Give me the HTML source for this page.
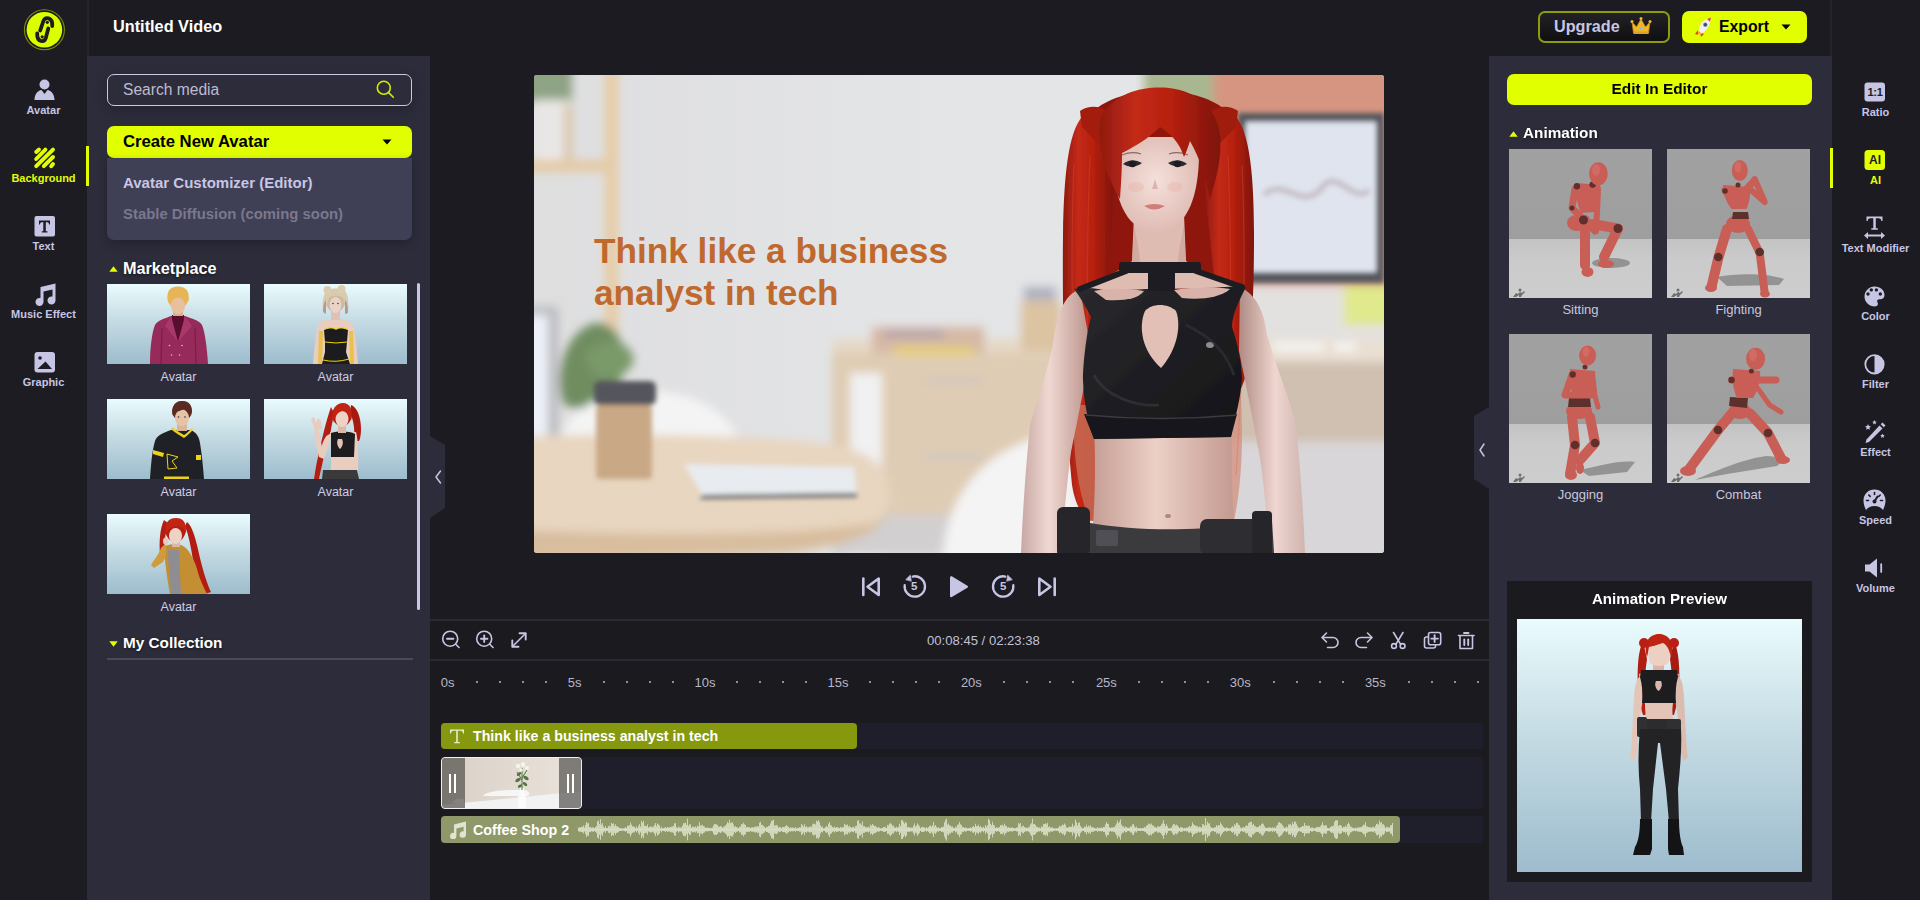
<!DOCTYPE html>
<html><head><meta charset="utf-8">
<style>
*{margin:0;padding:0;box-sizing:border-box}
html,body{width:1920px;height:900px;overflow:hidden;background:#1c1b21;font-family:"Liberation Sans",sans-serif}
.a{position:absolute}
.lav{color:#c7c5e4}
.b{font-weight:bold}
.nowrap{white-space:nowrap}
#lsb{left:0;top:0;width:87px;height:900px;background:#1d1c22}
#lstrip{left:87px;top:0;width:2px;height:56px;background:#25242c}
#lpanel{left:87px;top:56px;width:343px;height:844px;background:#2d2c3b}
#rpanel{left:1489px;top:56px;width:343px;height:844px;background:#2d2c3b}
#rsb{left:1832px;top:0;width:88px;height:900px;background:#1c1b21}
.sbl{font-size:11px;font-weight:bold;text-align:center;width:87px;left:0;line-height:13px;color:#c7c5e4}
.rsbl{font-size:11px;font-weight:bold;text-align:center;width:89px;left:1831px;line-height:13px;color:#c7c5e4}
.thumb{background:linear-gradient(180deg,#e9fbfd 0%,#c6dce4 45%,#9dbccd 100%);overflow:hidden}
.tlab{font-size:12.5px;color:#cfcde0;text-align:center;line-height:14px;margin-top:-1.5px}
.anim{background:linear-gradient(180deg,#a1a1a1 0%,#9e9e9e 60.2%,#c3c3c3 60.6%,#cbcbcb 75%,#cdcdcd 100%);overflow:hidden}
.alab{font-size:13px;color:#c9c7dc;text-align:center;line-height:15px;margin-top:-2px}
.sect{font-size:15.5px;font-weight:bold;color:#fff;text-shadow:0 1px 3px rgba(0,0,0,.6);line-height:18px}
.ruler{font-size:13px;color:#b9b7c9;line-height:15px}
.dot{width:2px;height:2px;background:#8f8d9e;top:681px}
.trk{background:#1f1f2b}
</style></head>
<body>
<div id="lsb" class="a"></div>
<div id="lstrip" class="a"></div>
<div class="a" style="left:1830px;top:0;width:2px;height:56px;background:#25242c"></div>
<div id="lpanel" class="a"></div>
<div id="rpanel" class="a"></div>
<div id="rsb" class="a"></div>
<div class="a" style="left:430px;top:621px;width:1059px;height:279px;background:#1a1a1f"></div>


<!-- logo -->
<svg class="a" style="left:20px;top:5px" width="50" height="50" viewBox="0 0 50 50">
  <circle cx="24.4" cy="24.7" r="20" fill="none" stroke="#7f8f00" stroke-width="1.1"/>
  <circle cx="24.4" cy="24.7" r="17.8" fill="#dcff00"/>
  <g fill="none" stroke="#1d1c22" stroke-width="3.8" stroke-linecap="round">
    <path d="M20.2 25.5 L23.2 16.5 C24.2 13.5 26.5 12.8 28.5 13.3 C31 14 32.5 16.5 32.2 21"/>
    <path d="M28.3 23.5 L25.8 33 C25 35.5 23 36.5 21 36 C18.5 35.2 17 33 17.2 28.5"/>
  </g>
  <circle cx="27.3" cy="17.3" r="1.6" fill="#1d1c22"/>
  <circle cx="22.2" cy="31.8" r="1.6" fill="#1d1c22"/>
</svg>

<!-- left sidebar icons -->
<svg class="a" style="left:34px;top:79px" width="22" height="22" viewBox="0 0 22 22">
  <circle cx="10.5" cy="5.5" r="5" fill="#c7c5e4"/>
  <path d="M0.5 21 C0.5 15 4 11.5 7.5 11 L10.5 15 L13.5 11 C17 11.5 20.5 15 20.5 21 Z" fill="#c7c5e4"/>
</svg>
<div class="a sbl" style="top:104px">Avatar</div>

<div class="a" style="left:86px;top:146px;width:3px;height:40px;background:#e2ff00"></div>
<svg class="a" style="left:28px;top:142px" width="34" height="30" viewBox="28 142 34 30" stroke="#e2ff00" stroke-width="3.9" stroke-linecap="round">
  <line x1="36.2" y1="152" x2="39" y2="149.6"/>
  <line x1="36.2" y1="159" x2="45.4" y2="149.6"/>
  <line x1="36.2" y1="166.2" x2="53" y2="149.6"/>
  <line x1="43.8" y1="166.2" x2="53" y2="157"/>
  <line x1="51.2" y1="166.2" x2="53" y2="164"/>
</svg>
<div class="a sbl" style="top:172px;color:#e2ff00">Background</div>

<svg class="a" style="left:34px;top:216px" width="22" height="21" viewBox="0 0 22 21">
  <rect x="0.5" y="0" width="20.5" height="20.5" rx="2" fill="#c7c5e4"/>
  <path d="M5 4.5 H16 V8.5 H15 C15 6.8 14.3 6.2 12.5 6.2 H11.8 V15.2 H13.5 V16.5 H7.8 V15.2 H9.3 V6.2 H8.5 C6.7 6.2 6 6.8 6 8.5 H5 Z" fill="#1d1c22"/>
</svg>
<div class="a sbl" style="top:240px">Text</div>

<svg class="a" style="left:33px;top:282px" width="23" height="24" viewBox="0 0 23 24">
  <path d="M7.5 5 L22.5 1.5 V18.5 a4 4 0 1 1 -3 -3.9 V7.5 L10.5 9.5 V20 a4 4 0 1 1 -3 -3.9 Z" fill="#c7c5e4"/>
</svg>
<div class="a sbl" style="top:308px">Music Effect</div>

<svg class="a" style="left:34px;top:352px" width="22" height="21" viewBox="0 0 22 21">
  <rect x="0.5" y="0" width="20.5" height="20.5" rx="3" fill="#c7c5e4"/>
  <circle cx="6" cy="6" r="1.8" fill="#1d1c22"/>
  <path d="M3.5 17 L11.5 9.5 L18 17 Z" fill="#1d1c22"/>
</svg>
<div class="a sbl" style="top:376px">Graphic</div>

<!-- header -->
<div class="a b nowrap" style="left:113px;top:17px;font-size:16.3px;color:#fff;line-height:19px">Untitled Video</div>

<div class="a" style="left:1538px;top:11px;width:132px;height:32px;border:2px solid #8d9c0e;border-radius:7px;background:linear-gradient(180deg,#222226,#0f0f12)"></div>
<div class="a b nowrap" style="left:1554px;top:17px;font-size:16.2px;color:#c7c5e4;line-height:19px">Upgrade</div>


<div class="a" style="left:1682px;top:11px;width:125px;height:32px;border-radius:7px;background:#e2ff00"></div>

<div class="a b nowrap" style="left:1719px;top:17px;font-size:15.8px;color:#000;line-height:19px">Export</div>
<svg class="a" style="left:1781px;top:24px" width="10" height="6" viewBox="0 0 10 6"><path d="M0.5 0.5 H9.5 L5 5.5 Z" fill="#000"/></svg>

<!-- left panel -->
<div class="a" style="left:107px;top:74px;width:305px;height:32px;border:1.3px solid #cac8e4;border-radius:7px;box-shadow:0 4px 14px rgba(0,0,0,0.22)"></div>
<div class="a nowrap" style="left:123px;top:81px;font-size:15.6px;color:#bdbbcf;line-height:18px">Search media</div>
<svg class="a" style="left:376px;top:80px" width="19" height="19" viewBox="0 0 19 19" fill="none" stroke="#d4ee00" stroke-width="1.6" stroke-linecap="round">
  <circle cx="7.8" cy="7.8" r="6.5"/><line x1="12.6" y1="12.6" x2="17.3" y2="17.3"/>
</svg>

<div class="a" style="left:107px;top:126px;width:305px;height:32px;border-radius:7px;background:#e2ff00"></div>
<div class="a b nowrap" style="left:123px;top:132px;font-size:16.7px;color:#000;line-height:19px">Create New Avatar</div>
<svg class="a" style="left:382px;top:139px" width="10" height="6" viewBox="0 0 10 6"><path d="M0.5 0.5 H9.5 L5 5.5 Z" fill="#000"/></svg>

<div class="a" style="left:107px;top:158px;width:305px;height:82px;border-radius:0 0 7px 7px;background:#3f3f55;box-shadow:0 3px 10px rgba(0,0,0,0.25)"></div>
<div class="a b nowrap" style="left:123px;top:174px;font-size:15px;color:#c8c6e4;line-height:17px">Avatar Customizer (Editor)</div>
<div class="a b nowrap" style="left:123px;top:206px;font-size:14.9px;color:#7a788e;line-height:17px">Stable Diffusion (coming soon)</div>

<svg class="a" style="left:109px;top:266px" width="9" height="6" viewBox="0 0 9 6"><path d="M4.5 0.3 L8.7 5.7 H0.3 Z" fill="#e2ff00"/></svg>
<div class="a sect nowrap" style="left:123px;top:259px;font-size:16.2px">Marketplace</div>

<div id="thumbs"></div><div class="a thumb" style="left:107px;top:284px;width:143px;height:80px"><svg width="143" height="80" viewBox="0 0 143 80" style="display:block">
<path d="M43 80 C43 64 45 48 48 41 C51 36 57 35 64 32 L78 32 C85 35 92 36 95 41 C98 48 100 64 101 80 Z" fill="#962a5a"/>
<path d="M55 44 L54 80 M88 44 L89 80" stroke="#7a1e48" stroke-width="1.2"/>
<path d="M65 31 L77 31 L77 38 L71 58 L65 38 Z" fill="#5a0e2e"/>
<path d="M64 32 L71 58 L58 42 Z" fill="#a8376c"/><path d="M78 32 L71 58 L85 42 Z" fill="#a8376c"/>
<g fill="#d8c8a8"><circle cx="62.5" cy="61.5" r="0.8"/><circle cx="75" cy="61.5" r="0.8"/><circle cx="64.5" cy="71" r="0.8"/><circle cx="72.5" cy="71" r="0.8"/></g>
<rect x="66" y="26" width="10" height="6" fill="#d6ae8c"/>
<ellipse cx="71" cy="15" rx="10" ry="10" fill="#e8b556"/><ellipse cx="71" cy="22" rx="7" ry="8.5" fill="#e7c19e"/>
<path d="M60.5 16 C59.5 6 64 2.5 71 2.5 C78 2.5 82.5 6 81.8 16 C81 18 80 18 79.5 17 C78 12 76 11 73 12 C70 14 66 15 63 14 C62 16 62 18 61.5 19 Z" fill="#e8b556"/>
</svg></div><div class="a tlab" style="left:107px;top:371px;width:143px">Avatar</div><div class="a thumb" style="left:264px;top:284px;width:143px;height:80px"><svg width="143" height="80" viewBox="0 0 143 80" style="display:block">
<path d="M49 80 C50 64 52 48 54 41 C56 37 62 36 67 35 L76 35 C81 36 87 37 89 41 C91 48 93 64 94 80 Z" fill="#e9cdbf"/>
<path d="M55 47 L59 47 L58 80 L54 80 Z" fill="#e8c038" opacity="0.85"/>
<path d="M85 47 L89 47 L90 80 L86 80 Z" fill="#e8c038" opacity="0.85"/>
<path d="M60 46 C66 43 70 44 72 45.5 C74 44 78 43 84 46 L83 58 L82 68 L86 80 L58 80 L61 68 L61 58 Z" fill="#1c1c1f"/>
<path d="M60 45.5 C66 43 70 44 72 45.5 C74 44 78 43 84 45.5" stroke="#f0d400" stroke-width="1" fill="none"/>
<path d="M61 58 Q72 60 83 58" stroke="#f0d400" stroke-width="1" fill="none"/>
<path d="M59 76 Q72 79 85 75" stroke="#f0d400" stroke-width="1" fill="none"/>
<rect x="67" y="27" width="9" height="9" fill="#e0c0b2"/>
<ellipse cx="71.5" cy="17" rx="10" ry="11" fill="#cdbba0"/><ellipse cx="71.5" cy="21" rx="5.8" ry="8" fill="#ebd2c8"/>
<path d="M59 28 C58 18 59 9 64 6 C68 4 76 4 80 6 C84 9 85 18 84 29 C82 26 81 20 79 14 C76 11 68 11 65 14 C63 20 62 26 59 28 Z" fill="#d9c9ae"/>
<path d="M59 28 C59 22 60 18 62 16 L62 30 Z M84 29 C84 22 83 18 81 16 L81 30 Z" fill="#b39894"/>
<circle cx="63.5" cy="6" r="4" fill="#dccdb0"/><circle cx="77.5" cy="5" r="4" fill="#dccdb0"/>
<circle cx="69" cy="19.5" r="0.8" fill="#4a3a3a"/><circle cx="74" cy="19.5" r="0.8" fill="#4a3a3a"/>
</svg></div><div class="a tlab" style="left:264px;top:371px;width:143px">Avatar</div><div class="a thumb" style="left:107px;top:399px;width:143px;height:80px"><svg width="143" height="80" viewBox="0 0 143 80" style="display:block">
<path d="M43 80 C44 66 45 52 48 42 C50 36 56 34 64 31 L84 31 C90 34 92 38 93 44 C95 56 96 68 97 80 Z" fill="#1f2126"/>
<path d="M64 30 C68 34 74 37 77 39 C80 37 84 33 86 31 L85 29 C82 32 79 35 77 36 C74 34 68 31 66 28 Z" fill="#ecd31a"/>
<path d="M46 51 L57 54 L56 58 L46 55 Z" fill="#ecd31a"/>
<path d="M89 56 L94 56 L94 61 L89 61 Z" fill="#ecd31a"/>
<path d="M60 55 L71 58 L65 62 L70 69 L61 70 Z" fill="none" stroke="#ecd31a" stroke-width="1"/>
<rect x="57" y="77.5" width="25" height="2.5" fill="#ecd31a"/>
<rect x="70" y="24" width="10" height="8" fill="#d9b59a"/>
<ellipse cx="75" cy="12" rx="10" ry="10" fill="#5b2a22"/><ellipse cx="75" cy="19" rx="7" ry="8.5" fill="#e6c3a6"/>
<path d="M65.5 16 C64.5 6 69 2 75 2 C82 2 86 6 84.5 15 C83 11 80 10 77 10 C73 12 70 13 67 13 C66.5 15 66.5 16 65.5 16 Z" fill="#5b2a22"/>
<circle cx="71.5" cy="18" r="0.8" fill="#3a2a2a"/><circle cx="78" cy="18" r="0.8" fill="#3a2a2a"/>
</svg></div><div class="a tlab" style="left:107px;top:486px;width:143px">Avatar</div><div class="a thumb" style="left:264px;top:399px;width:143px;height:80px"><svg width="143" height="80" viewBox="0 0 143 80" style="display:block">
<path d="M67 8 C62 22 58 40 54 58 C52 66 51 74 50 80 L55 80 C58 66 62 48 66 36 L70 14 Z" fill="#b41e12"/>
<path d="M87 6 C93 8 97 18 97 30 C97 36 96 40 95 42 L90 42 C91 32 90 22 86 14 Z" fill="#a81a10"/>
<path d="M66 35 C62 36 60 40 58 46 L55 58 L60 60 L64 48 L66 44 Z" fill="#e8ccbe"/>
<path d="M55 58 C53 50 51 40 50 30 L54 28 C56 38 58 48 60 58 Z" fill="#e8ccbe"/>
<path d="M47 20 L50 18 L52 24 L54 19 L57 22 L58 30 L51 31 Z" fill="#e8ccbe"/>
<path d="M66 33 L92 33 C94 40 95 55 94 80 L66 80 C68 60 67 45 66 33 Z" fill="#e9cdbf"/>
<path d="M67 34 C75 32 85 32 91 35 L90 58 L67 58 Z" fill="#1d1d20"/>
<path d="M74 40 C72 44 74 48 76 50 C78 48 80 44 78 40 Z" fill="#e4c2b4"/>
<path d="M59 71 L93 71 L95 80 L58 80 Z" fill="#3a3a3d"/>
<rect x="74" y="26" width="8" height="8" fill="#dcb8a8"/>
<ellipse cx="78" cy="16" rx="10" ry="11" fill="#b41e12"/><ellipse cx="78" cy="20" rx="6.5" ry="8" fill="#ecd3c6"/>
<path d="M69 24 C67 10 72 4 79 4 C86 4 89 10 87 22 C86 16 83 12 79 12 C75 12 71 16 69 24 Z" fill="#c22414"/>
</svg></div><div class="a tlab" style="left:264px;top:486px;width:143px">Avatar</div><div class="a thumb" style="left:107px;top:514px;width:143px;height:80px"><svg width="143" height="80" viewBox="0 0 143 80" style="display:block">
<path d="M57 6 C53 14 52 28 53 40 L57 44 C57 30 58 18 62 10 Z" fill="#b31e12"/>
<path d="M80 8 C86 12 90 30 94 48 C97 60 101 72 104 78 L98 80 C94 70 90 58 86 46 C84 34 82 22 78 12 Z" fill="#b21d12"/>
<path d="M58 32 C62 30 70 30 74 31 C82 34 88 46 92 62 C95 70 98 76 100 80 L63 80 C61 70 59 56 58 46 Z" fill="#c48f33"/>
<path d="M61 36 L72 36 C73 50 73 66 74 80 L64 80 C63 66 61 50 61 36 Z" fill="#8d8d92"/>
<path d="M58 30 C60 36 60 42 56 48 L47 54 L44 51 C47 46 52 40 54 34 Z" fill="#cf9b3c"/>
<ellipse cx="58.5" cy="27" rx="2.5" ry="3.5" fill="#e7c8ba"/>
<rect x="65" y="26" width="8" height="7" fill="#dcb8a8"/>
<ellipse cx="68.5" cy="17" rx="10" ry="11" fill="#b41e12"/><ellipse cx="68.5" cy="22" rx="6.5" ry="8" fill="#ecd3c6"/>
<path d="M59 20 C57 8 62 4 69 4 C76 4 80 8 79 20 C77 14 74 12 69 12 C65 12 61 15 59 20 Z" fill="#c42416"/>
</svg></div><div class="a tlab" style="left:107px;top:601px;width:143px">Avatar</div><div class="a anim" style="left:1509px;top:149px;width:143px;height:149px"><svg width="143" height="149" viewBox="0 0 143 149" style="display:block"><ellipse cx="102" cy="114" rx="19" ry="5" fill="#7a7a7a" opacity="0.7"/><path d="M76 71 L76 116" stroke="#c85e56" stroke-width="10" stroke-linecap="round" stroke-linejoin="round" fill="none"/><ellipse cx="78.5" cy="123" rx="6" ry="5" fill="#c85e56"/><path d="M83 75 L109 79.5 L95 108" stroke="#c85e56" stroke-width="10" stroke-linecap="round" stroke-linejoin="round" fill="none"/><ellipse cx="97" cy="115" rx="8" ry="4" fill="#c85e56"/><ellipse cx="68" cy="74" rx="10" ry="8" fill="#c85e56"/><path d="M68 34 L91 36 C92 46 90 56 86 63 L72 64 C68 56 66 44 68 34 Z" fill="#c85e56"/><path d="M66 40 L63 59 L86 82" stroke="#c85e56" stroke-width="7" stroke-linecap="round" stroke-linejoin="round" fill="none"/><path d="M89 40 L88 63 L87 82" stroke="#c85e56" stroke-width="6" stroke-linecap="round" stroke-linejoin="round" fill="none"/><circle cx="67.9" cy="37.3" r="3.2" fill="#5e302c"/><circle cx="83.6" cy="35.6" r="3.2" fill="#5e302c"/><circle cx="63" cy="59" r="2.5" fill="#5e302c"/><circle cx="74.5" cy="71" r="4.5" fill="#5e302c"/><circle cx="109" cy="79.5" r="4.5" fill="#5e302c"/><ellipse cx="89.4" cy="24.8" rx="9.4" ry="11.6" fill="#c85e56"/><ellipse cx="87" cy="21" rx="4" ry="6" fill="#d77a70" opacity="0.5"/><g fill="#6e6e6e"><circle cx="11" cy="141" r="1.5"/><path d="M4 148 L7 144 L9 145 L11 143 L13 144 L15 142 L16 143 L13 146 L12 148 L10 148 L10 146 L7 148 Z"/></g></svg></div><div class="a alab" style="left:1509px;top:304px;width:143px">Sitting</div><div class="a anim" style="left:1667px;top:149px;width:143px;height:149px"><svg width="143" height="149" viewBox="0 0 143 149" style="display:block"><path d="M50 128 C70 124 100 124 117 130 L112 136 L60 137 Z" fill="#7a7a7a" opacity="0.7"/><path d="M60 80 L51.3 109 L44.7 137" stroke="#c85e56" stroke-width="10" stroke-linecap="round" stroke-linejoin="round" fill="none"/><path d="M81 80 L92.7 104 L97.7 144" stroke="#c85e56" stroke-width="8" stroke-linecap="round" stroke-linejoin="round" fill="none"/><ellipse cx="44" cy="139" rx="6" ry="4" fill="#c85e56"/><ellipse cx="98" cy="145" rx="5" ry="3.5" fill="#c85e56"/><ellipse cx="71" cy="75" rx="12" ry="9" fill="#c85e56"/><path d="M66 63 L81 63 L82 70 L65 70 Z" fill="#5e302c"/><path d="M56 36 L83 38 C84 46 82 54 79.5 60 L64.6 60 C60 54 56 46 56 36 Z" fill="#c85e56"/><path d="M58 41 L66 54.6 L86 33" stroke="#c85e56" stroke-width="7" stroke-linecap="round" stroke-linejoin="round" fill="none"/><path d="M83 40 L97.7 53 L87.7 30" stroke="#c85e56" stroke-width="6" stroke-linecap="round" stroke-linejoin="round" fill="none"/><circle cx="51.3" cy="108" r="4.3" fill="#5e302c"/><circle cx="92.7" cy="103" r="4.3" fill="#5e302c"/><circle cx="58" cy="42" r="2.8" fill="#5e302c"/><circle cx="71" cy="36" r="2.5" fill="#5e302c"/><ellipse cx="72.8" cy="21.5" rx="8" ry="10.5" fill="#c85e56"/><ellipse cx="71" cy="18" rx="3.5" ry="5.5" fill="#d77a70" opacity="0.5"/><g fill="#6e6e6e"><circle cx="11" cy="141" r="1.5"/><path d="M4 148 L7 144 L9 145 L11 143 L13 144 L15 142 L16 143 L13 146 L12 148 L10 148 L10 146 L7 148 Z"/></g></svg></div><div class="a alab" style="left:1667px;top:304px;width:143px">Fighting</div><div class="a anim" style="left:1509px;top:334px;width:143px;height:149px"><svg width="143" height="149" viewBox="0 0 143 149" style="display:block"><path d="M71 136 C90 132 110 126 126 128 L118 138 L80 142 Z" fill="#7a7a7a" opacity="0.7"/><path d="M81 83 L86 109 L71 126" stroke="#c85e56" stroke-width="10" stroke-linecap="round" stroke-linejoin="round" fill="none"/><ellipse cx="71" cy="134" rx="4" ry="6" fill="#c85e56"/><path d="M63 83 L66 111 L61 140" stroke="#c85e56" stroke-width="10" stroke-linecap="round" stroke-linejoin="round" fill="none"/><ellipse cx="62" cy="141" rx="6" ry="5" fill="#c85e56"/><ellipse cx="70" cy="77" rx="13" ry="8" fill="#c85e56"/><path d="M60 64 L81 64 L82 73 L59 73 Z" fill="#5e302c"/><path d="M61 35 L86 37 C87 46 85 54 81 62 L64.6 63 C61 54 60 44 61 35 Z" fill="#c85e56"/><path d="M63 41 L56 61 L84.4 61" stroke="#c85e56" stroke-width="7" stroke-linecap="round" stroke-linejoin="round" fill="none"/><path d="M84 44 L86 62 L89 73" stroke="#c85e56" stroke-width="5" stroke-linecap="round" stroke-linejoin="round" fill="none"/><circle cx="63.7" cy="40.5" r="3.2" fill="#5e302c"/><circle cx="76" cy="33" r="2.5" fill="#5e302c"/><circle cx="66" cy="111" r="4.3" fill="#5e302c"/><circle cx="86" cy="109" r="4.3" fill="#5e302c"/><ellipse cx="78.6" cy="21.5" rx="8.5" ry="10" fill="#c85e56"/><ellipse cx="77" cy="18" rx="3.5" ry="5" fill="#d77a70" opacity="0.5"/><g fill="#6e6e6e"><circle cx="11" cy="141" r="1.5"/><path d="M4 148 L7 144 L9 145 L11 143 L13 144 L15 142 L16 143 L13 146 L12 148 L10 148 L10 146 L7 148 Z"/></g></svg></div><div class="a alab" style="left:1509px;top:489px;width:143px">Jogging</div><div class="a anim" style="left:1667px;top:334px;width:143px;height:149px"><svg width="143" height="149" viewBox="0 0 143 149" style="display:block"><path d="M28 146 C50 136 80 124 100 122 L119 124 L110 132 L60 140 Z" fill="#7a7a7a" opacity="0.7"/><path d="M66 78 L51 96 L21.5 136" stroke="#c85e56" stroke-width="10" stroke-linecap="round" stroke-linejoin="round" fill="none"/><ellipse cx="21" cy="137" rx="8" ry="5" fill="#c85e56"/><path d="M83 79.5 L101 99 L114 124" stroke="#c85e56" stroke-width="10" stroke-linecap="round" stroke-linejoin="round" fill="none"/><ellipse cx="116" cy="126" rx="7" ry="4" fill="#c85e56"/><ellipse cx="73" cy="77" rx="11" ry="8" fill="#c85e56"/><path d="M63 63 L81 64 L80 74 L62 72 Z" fill="#5e302c"/><path d="M66 35 L93 37 C94 46 91 56 86 64 L70 64 C66 56 65 44 66 35 Z" fill="#c85e56"/><path d="M64.6 46 L109 46" stroke="#c85e56" stroke-width="7" stroke-linecap="round" stroke-linejoin="round" fill="none"/><path d="M91 54.6 L102.6 71 L114 78" stroke="#c85e56" stroke-width="5" stroke-linecap="round" stroke-linejoin="round" fill="none"/><circle cx="64.6" cy="46" r="3.2" fill="#5e302c"/><circle cx="84.4" cy="37" r="2.5" fill="#5e302c"/><circle cx="51" cy="96" r="4.3" fill="#5e302c"/><circle cx="101" cy="99" r="4.3" fill="#5e302c"/><ellipse cx="88.6" cy="24.8" rx="9.5" ry="11" fill="#c85e56"/><ellipse cx="86" cy="21" rx="4" ry="6" fill="#d77a70" opacity="0.5"/><g fill="#6e6e6e"><circle cx="11" cy="141" r="1.5"/><path d="M4 148 L7 144 L9 145 L11 143 L13 144 L15 142 L16 143 L13 146 L12 148 L10 148 L10 146 L7 148 Z"/></g></svg></div><div class="a alab" style="left:1667px;top:489px;width:143px">Combat</div>

<div class="a" style="left:417px;top:283px;width:3px;height:327px;border-radius:2px;background:#c7c5e8"></div>

<svg class="a" style="left:109px;top:641px" width="9" height="6" viewBox="0 0 9 6"><path d="M4.5 5.7 L8.7 0.3 H0.3 Z" fill="#e2ff00"/></svg>
<div class="a sect nowrap" style="left:123px;top:634px;font-size:15.3px">My Collection</div>
<div class="a" style="left:107px;top:658px;width:306px;height:2px;background:#4a4959"></div>

<!-- collapse tabs -->
<svg class="a" style="left:430px;top:436px" width="16" height="84" viewBox="0 0 16 84"><path d="M0 0 L15 9 V72 L0 82 Z" fill="#2d2c3b"/><path d="M10.5 35 L6 41 L10.5 47" fill="none" stroke="#c7c5e4" stroke-width="1.5" stroke-linecap="round" stroke-linejoin="round"/></svg>
<svg class="a" style="left:1474px;top:407px" width="16" height="84" viewBox="0 0 16 84"><path d="M15 0 L0 9 V72 L15 82 Z" fill="#2d2c3b"/><path d="M10 37 L6 43 L10 49" fill="none" stroke="#c7c5e4" stroke-width="1.5" stroke-linecap="round" stroke-linejoin="round"/></svg>

<!-- preview -->
<div id="preview" class="a" style="left:534px;top:75px;width:850px;height:478px;border-radius:3px;overflow:hidden"><svg style="display:block" width="850" height="478" viewBox="0 0 850 478">
<defs>
  <filter id="bl6" x="-20%" y="-20%" width="140%" height="140%"><feGaussianBlur stdDeviation="5"/></filter>
  <filter id="bl3" x="-20%" y="-20%" width="140%" height="140%"><feGaussianBlur stdDeviation="2.5"/></filter>
  <filter id="bl1"><feGaussianBlur stdDeviation="0.8"/></filter>
  <filter id="bl05" x="-5%" y="-5%" width="110%" height="110%"><feGaussianBlur stdDeviation="0.55"/></filter>
  <linearGradient id="wallg" x1="0" y1="0" x2="1" y2="0">
    <stop offset="0" stop-color="#dededf"/><stop offset="0.4" stop-color="#e3e4e6"/><stop offset="1" stop-color="#e5e6e8"/>
  </linearGradient>
  <linearGradient id="hairg" x1="0" y1="0" x2="1" y2="0">
    <stop offset="0" stop-color="#8e1a10"/><stop offset="0.3" stop-color="#c42a16"/><stop offset="0.6" stop-color="#b5200f"/><stop offset="1" stop-color="#7d140c"/>
  </linearGradient>
  <linearGradient id="hairend" x1="0" y1="0" x2="0" y2="1">
    <stop offset="0" stop-color="#b3200f"/><stop offset="0.6" stop-color="#b83a26"/><stop offset="1" stop-color="#d9a08e" stop-opacity="0.3"/>
  </linearGradient>
  <linearGradient id="skinarmL" x1="0" y1="0" x2="1" y2="0">
    <stop offset="0" stop-color="#c8a8a4"/><stop offset="0.4" stop-color="#f0d8d2"/><stop offset="1" stop-color="#b89088"/>
  </linearGradient>
  <linearGradient id="skinarmR" x1="0" y1="0" x2="1" y2="0">
    <stop offset="0" stop-color="#b08a84"/><stop offset="0.55" stop-color="#efd6d0"/><stop offset="1" stop-color="#d0b4ae"/>
  </linearGradient>
  <linearGradient id="midg" x1="0" y1="0" x2="1" y2="0">
    <stop offset="0" stop-color="#c49d94"/><stop offset="0.45" stop-color="#ecd0c6"/><stop offset="1" stop-color="#c29890"/>
  </linearGradient>
  <radialGradient id="faceg" cx="0.5" cy="0.45" r="0.6">
    <stop offset="0" stop-color="#f5e0da"/><stop offset="1" stop-color="#dcb8b0"/>
  </radialGradient>
  <linearGradient id="topg" x1="0" y1="0" x2="1" y2="1">
    <stop offset="0" stop-color="#2a2a2e"/><stop offset="0.5" stop-color="#1e1e22"/><stop offset="1" stop-color="#141416"/>
  </linearGradient>
</defs>
<rect width="850" height="478" fill="url(#wallg)"/>
<g filter="url(#bl6)">
  <!-- top-left shelf & plant -->
  <rect x="-10" y="-10" width="48" height="38" fill="#8fa385"/>
  <rect x="0" y="25" width="36" height="62" fill="#e9e7e5"/>
  <rect x="30" y="30" width="8" height="56" fill="#d9c4a6"/>
  <rect x="-10" y="85" width="84" height="12" fill="#e4caa4"/>
  <rect x="71" y="-10" width="13" height="345" fill="#e6cca6"/>
  <!-- right-side backgrounds -->
  <rect x="610" y="-10" width="72" height="55" fill="#a8b78f"/>
  <rect x="679" y="-10" width="180" height="220" fill="#d59580"/>
  <rect x="600" y="210" width="260" height="80" fill="#e3e1df"/>
  <rect x="810" y="210" width="50" height="40" fill="#e0e98c"/>
  <rect x="560" y="265" width="300" height="24" fill="#e9dfd2"/>
  <rect x="560" y="287" width="300" height="80" fill="#cfc0b1"/>
  <rect x="560" y="368" width="300" height="120" fill="#d8d6d8"/>
  <rect x="740" y="268" width="50" height="8" fill="#f6f6f6"/>
  <rect x="800" y="268" width="22" height="8" fill="#f6f6f6"/>
  <!-- cabinet -->
  <rect x="298" y="264" width="240" height="180" fill="#dfccb4"/><rect x="298" y="264" width="240" height="14" fill="#e6d8c6"/><rect x="390" y="304" width="60" height="4" fill="#c9c6c4"/><rect x="390" y="380" width="60" height="4" fill="#c9c6c4"/>
  <rect x="316" y="298" width="32" height="190" fill="#f1f1f2"/>
  <rect x="298" y="440" width="240" height="40" fill="#d2cfd0"/>
  <rect x="338" y="252" width="112" height="26" fill="#d6b9a6"/><rect x="350" y="256" width="60" height="6" fill="#8c8cb0" opacity="0.6"/>
  <rect x="360" y="272" width="80" height="8" fill="#e8d070"/>
  <rect x="487" y="226" width="40" height="50" fill="#dcc3a2"/><rect x="490" y="212" width="32" height="14" fill="#8e8ea6" opacity="0.6"/>
  <!-- left monitor -->
  <rect x="-10" y="232" width="34" height="180" fill="#b9babe"/>
  <rect x="-10" y="240" width="24" height="150" fill="#edf1f8"/>
  <!-- plant -->
  <path d="M30 330 C20 300 30 262 55 250 C80 240 95 270 88 300 C84 320 70 335 50 335 Z" fill="#6f8d60"/><path d="M50 280 C70 262 96 262 100 285 C96 300 80 305 60 300 Z" fill="#7a9a6a"/>
  <!-- white chair back -->
  <path d="M27 372 C27 338 60 318 110 316 C160 316 198 336 208 374 Z" fill="#f4f4f5"/>
  <!-- right chair -->
  <path d="M408 490 C410 430 440 375 520 358 L540 358 L540 490 Z" fill="#f4f4f5"/>
  <!-- table -->
  <path d="M-10 362 C80 357 230 360 300 370 C345 378 358 400 356 425 C352 450 320 466 250 470 L-10 475 Z" fill="#e8d6c0"/>
  <path d="M-10 455 C100 460 260 462 340 448 C350 445 354 438 356 428 C354 452 330 470 250 478 L-10 485 Z" fill="#d8bd9e"/>
</g>
<g filter="url(#bl3)">
  <!-- cup -->
  <rect x="62" y="330" width="56" height="74" rx="4" fill="#c9a885"/>
  <rect x="60" y="306" width="62" height="24" rx="6" fill="#55565d"/>
  <!-- notebook -->
  <path d="M150 389 L320 392 L323 418 L168 420 Z" fill="#e8ebef"/>
  <path d="M168 420 L323 418 L323 422 L166 424 Z" fill="#5a5d66"/>
</g>
<!-- figure -->
<g filter="url(#bl05)">
  <!-- monitor (right bg) -->
  <g filter="url(#bl3)">
    <rect x="704" y="38" width="146" height="170" fill="#57585e"/>
    <rect x="712" y="47" width="130" height="150" fill="#dfe4ee"/>
    <path d="M730 120 C750 100 770 140 790 110 C805 95 820 130 835 115" stroke="#b9a9b0" stroke-width="6" fill="none" opacity="0.6"/>
  </g>
  <!-- back hair -->
  <path d="M562 34 C590 10 662 10 690 34 C704 60 702 150 698 320 L552 320 C548 150 548 60 562 34 Z" fill="#8f170d"/>
  <!-- pigtails -->
  <path d="M552 38 C536 50 530 90 529 160 C528 250 531 340 538 410 C542 435 552 446 562 446 C560 380 565 300 572 230 C578 160 582 100 580 60 Z" fill="url(#hairg)"/>
  <path d="M698 38 C714 50 720 90 720 160 C720 220 718 260 712 300 C706 320 700 326 694 326 C692 300 688 260 682 220 C676 160 668 100 670 60 Z" fill="url(#hairg)"/>
  <path d="M546 36 C558 28 574 32 580 44 C582 56 578 70 572 78 C566 70 556 60 548 52 Z" fill="#a31b0f"/>
  <path d="M704 36 C692 28 676 32 670 44 C668 56 672 70 678 78 C684 70 694 60 702 52 Z" fill="#a01a0e"/>
  <g stroke="#d9452a" stroke-width="1.2" opacity="0.45" fill="none">
    <path d="M540 90 C536 180 538 280 546 400"/><path d="M556 80 C552 180 552 280 556 420"/>
    <path d="M708 90 C712 180 710 280 702 400"/><path d="M694 80 C698 180 698 280 692 420"/>
  </g>
  <path d="M540 330 C538 380 545 420 556 446 L566 446 C562 400 563 360 566 330 Z" fill="#c66a52" opacity="0.85"/>
  <path d="M706 310 C710 360 708 410 700 446 L692 446 C696 400 696 350 694 310 Z" fill="#d48a76" opacity="0.7"/>
  <!-- arms -->
  <path d="M546 214 C530 220 522 240 519 270 C512 300 502 330 496 350 C492 390 489 430 487 478 L527 478 C530 440 534 400 537 377 C545 340 552 300 557 276 Z" fill="url(#skinarmL)"/>
  <path d="M706 212 C722 220 730 235 733 260 C745 300 758 330 762 350 C766 390 769 430 771 478 L735 478 C733 440 729 400 725 377 C718 340 710 300 705 276 Z" fill="url(#skinarmR)"/>
  <!-- neck & chest -->
  <path d="M600 140 L650 140 L652 186 C668 198 690 206 712 212 L540 216 C562 206 584 198 598 186 Z" fill="#dfbcb2"/>
  <path d="M600 150 C604 170 606 180 606 190 L598 190 Z M650 150 C646 170 644 180 644 190 L652 190 Z" fill="#c89c92" opacity="0.6"/>
  <!-- midriff -->
  <path d="M560 355 L698 355 C697 390 698 420 702 478 L557 478 C561 430 562 390 560 355 Z" fill="url(#midg)"/>
  <ellipse cx="634" cy="441" rx="3" ry="2" fill="#b08a82"/>
  <!-- top -->
  <path d="M540 214 C552 212 566 213 580 218 L612 214 L642 214 L672 214 C686 212 700 211 712 212 C704 228 698 240 698 252 C704 270 708 290 708 303 C706 330 700 345 697 362 L560 364 C554 345 550 330 549 305 C549 290 552 260 557 242 C552 232 546 222 540 214 Z" fill="url(#topg)"/>
  <rect x="585" y="187" width="82" height="11" rx="3" fill="#1f1f22"/>
  <rect x="614" y="196" width="27" height="20" fill="#1f1f22"/>
  <path d="M592 196 L546 214" stroke="#1f1f22" stroke-width="6" stroke-linecap="round"/>
  <path d="M662 196 L708 212" stroke="#1f1f22" stroke-width="6" stroke-linecap="round"/>
  <path d="M550 339 Q628 346 703 339 L697 362 L560 364 Z" fill="#19191c"/>
  <path d="M552 340 Q628 347 703 340" stroke="#3b3b40" stroke-width="1.4" fill="none"/>
  <!-- cutouts -->
  <path d="M611 236 C604 252 608 276 627 293 C642 276 648 252 642 236 C634 228 618 228 611 236 Z" fill="#e2c0b5"/>
  <path d="M560 216 C574 213 592 213 610 216 C604 224 590 226 572 225 Z" fill="#d9b3a9"/>
  <path d="M640 215 C660 212 680 212 696 214 C686 223 666 225 648 223 Z" fill="#d9b3a9"/>
  <ellipse cx="676" cy="270" rx="4" ry="3" fill="#d8d8dc" opacity="0.6"/><path d="M560 300 C570 320 600 332 625 330" stroke="#3a3a3f" stroke-width="3" fill="none" opacity="0.6"/><path d="M652 250 C668 258 690 270 700 300" stroke="#3a3a3f" stroke-width="3" fill="none" opacity="0.5"/>
  <!-- face -->
  <path d="M579 62 C578 100 582 128 596 145 C606 155 614 159 621 159 C628 159 638 155 648 145 C662 128 666 100 665 62 Z" fill="url(#faceg)"/>
  <path d="M589 89 Q598 82 608 88 Q598 95 589 89 Z" fill="#2a2930"/>
  <path d="M634 88 Q644 82 653 89 Q644 95 634 88 Z" fill="#2a2930"/>
  <circle cx="598.5" cy="89" r="3.3" fill="#1b1a20"/><circle cx="643.5" cy="89" r="3.3" fill="#1b1a20"/>
  <path d="M588 80 Q598 76 607 79 M635 79 Q644 76 654 80" stroke="#8a6a66" stroke-width="1.2" fill="none"/>
  <path d="M621 104 L618 114 L624 114 Z" fill="#d3a49c" opacity="0.7"/>
  <path d="M610 131 Q620 127 631 131 Q620 138 610 131 Z" fill="#cf7f78"/>
  <ellipse cx="602" cy="112" rx="8" ry="5" fill="#e8a8a0" opacity="0.3"/>
  <ellipse cx="641" cy="112" rx="8" ry="5" fill="#e8a8a0" opacity="0.3"/>
  <!-- bangs -->
  <path d="M566 44 C580 16 612 11 635 13 C662 16 682 32 686 60 C688 84 682 104 676 124 C672 102 666 84 656 66 C654 72 652 78 650 82 C646 68 636 58 626 52 C614 64 600 72 588 78 C588 96 587 110 586 124 C574 104 562 74 566 44 Z" fill="url(#hairg)"/>
  <!-- belt -->
  <path d="M523 446 L556 448 C600 456 660 456 700 450 L738 446 L740 478 L523 478 Z" fill="#3a3a3e"/>
  <rect x="523" y="432" width="33" height="48" rx="6" fill="#27272a"/>
  <rect x="666" y="444" width="60" height="36" rx="7" fill="#2f2f33"/>
  <rect x="718" y="436" width="20" height="44" rx="4" fill="#26262a"/>
  <rect x="562" y="455" width="22" height="16" rx="2" fill="#505055"/>
</g>
</svg>
</div>

<div class="a b nowrap" style="left:594px;top:230px;font-size:35.2px;line-height:42px;color:#c0692f">Think like a business<br>analyst in tech</div>
<!-- playback -->
<!-- playback -->
<svg class="a" style="left:858px;top:572px" width="204" height="30" viewBox="858 572 204 30" fill="none" stroke="#c7c5e4" stroke-width="2.6" stroke-linecap="round" stroke-linejoin="round">
  <line x1="863.3" y1="578.5" x2="863.3" y2="595"/>
  <path d="M878.7 578.5 V595 L867.5 586.8 Z"/>
  <path d="M912.68 576.52 A10.2 10.2 0 1 1 904.70 585.08" stroke-width="2.3"/><path d="M906 579.4 L910.3 575.2 L911.2 580.8 Z" fill="#c7c5e4" stroke="#c7c5e4" stroke-width="0.8"/>
  <path d="M951.2 577.4 V596 L966.8 586.7 Z" fill="#c7c5e4" stroke-width="2.4"/>
  <path d="M1005.32 576.52 A10.2 10.2 0 1 0 1013.30 585.08" stroke-width="2.3"/><path d="M1012 579.4 L1007.7 575.2 L1006.8 580.8 Z" fill="#c7c5e4" stroke="#c7c5e4" stroke-width="0.8"/>
  <path d="M1039.3 578.5 V595 L1050.5 586.8 Z"/>
  <line x1="1054.7" y1="578.5" x2="1054.7" y2="595"/>
</svg>
<div class="a b" style="left:903.3px;top:579.5px;width:22px;text-align:center;font-size:11.5px;line-height:13px;color:#c7c5e4">5</div>
<div class="a b" style="left:992.2px;top:579.5px;width:22px;text-align:center;font-size:11.5px;line-height:13px;color:#c7c5e4">5</div>

<!-- timeline tools -->
<svg class="a" style="left:438px;top:627px" width="96" height="26" viewBox="438 627 96 26" fill="none" stroke="#c7c5e4" stroke-width="1.6" stroke-linecap="round" stroke-linejoin="round">
  <circle cx="450.2" cy="638.7" r="7.5"/><line x1="455.8" y1="644.3" x2="459" y2="647.5"/><line x1="447" y1="638.7" x2="453.4" y2="638.7" stroke-width="1.9"/>
  <circle cx="484.2" cy="638.7" r="7.5"/><line x1="489.8" y1="644.3" x2="493" y2="647.5"/><line x1="481" y1="638.7" x2="487.4" y2="638.7" stroke-width="1.9"/><line x1="484.2" y1="635.5" x2="484.2" y2="641.9" stroke-width="1.9"/>
  <line x1="512.5" y1="646.5" x2="525.5" y2="633.5"/><path d="M512.3 640.5 V646.7 H518.5" stroke-width="1.9"/><path d="M519.5 633.3 H525.7 V639.5" stroke-width="1.9"/>
</svg>
<svg class="a" style="left:1316px;top:627px" width="164" height="26" viewBox="1316 627 164 26" fill="none" stroke="#c7c5e4" stroke-width="1.6" stroke-linecap="round" stroke-linejoin="round">
  <path d="M1326.5 633 L1322 637.5 L1326.5 642"/><path d="M1322.5 637.5 H1333 A5 5 0 0 1 1333 647.5 H1327.5"/>
  <path d="M1367.5 633 L1372 637.5 L1367.5 642"/><path d="M1371.5 637.5 H1361 A5 5 0 0 0 1361 647.5 H1366.5"/>
  <line x1="1393.5" y1="632.5" x2="1400.5" y2="644.2"/><line x1="1403" y1="632.5" x2="1396" y2="644.2"/><circle cx="1394" cy="646" r="2.4"/><circle cx="1402.6" cy="646" r="2.4"/>
  <rect x="1428.5" y="632.5" width="12.2" height="12.2" rx="2"/><path d="M1428 637 H1426.5 A2 2 0 0 0 1424.5 639 V646 A2 2 0 0 0 1426.5 648 H1433.5 A2 2 0 0 0 1435.5 646 V645"/><line x1="1434.6" y1="635.3" x2="1434.6" y2="641.9" stroke-width="1.9"/><line x1="1431.3" y1="638.6" x2="1437.9" y2="638.6" stroke-width="1.9"/>
  <line x1="1458.5" y1="635.5" x2="1474" y2="635.5"/><line x1="1464" y1="633" x2="1468.5" y2="633" stroke-width="1.9"/><path d="M1460 636 V648.5 H1472.5 V636"/><line x1="1464.3" y1="639.5" x2="1464.3" y2="645" stroke-width="1.9"/><line x1="1468.2" y1="639.5" x2="1468.2" y2="645" stroke-width="1.9"/>
</svg>

<!-- right sidebar icons -->
<svg class="a" style="left:1864px;top:82px" width="22" height="21" viewBox="0 0 22 21"><rect x="0.5" y="0.5" width="20.5" height="19" rx="3" fill="#c7c5e4"/></svg>
<div class="a b nowrap" style="left:1864px;top:86px;width:22px;text-align:center;font-size:11px;line-height:12px;color:#1d1c22;letter-spacing:-0.3px">1:1</div>
<div class="a rsbl" style="top:106px">Ratio</div>

<div class="a" style="left:1830px;top:148px;width:3px;height:40px;background:#e2ff00"></div>
<svg class="a" style="left:1864px;top:150px" width="22" height="21" viewBox="0 0 22 21"><rect x="0.5" y="0" width="20.5" height="20" rx="3.5" fill="#e2ff00"/></svg>
<div class="a b nowrap" style="left:1864px;top:154px;width:22px;text-align:center;font-size:12px;line-height:13px;color:#1d1c22">AI</div>
<div class="a rsbl" style="top:174px;color:#e2ff00">AI</div>

<svg class="a" style="left:1863px;top:215px" width="24" height="25" viewBox="0 0 24 25" fill="#c7c5e4">
  <path d="M3.5 1.5 H19.5 V6 H18.3 C18.2 4 17.5 3.2 15.5 3.2 H12.8 V13.3 H14.8 V14.8 H8.3 V13.3 H10.3 V3.2 H7.5 C5.5 3.2 4.8 4 4.7 6 H3.5 Z"/>
  <path d="M1 20.5 L5 17 V19.6 H18 V17 L22 20.5 L18 24 V21.4 H5 V24 Z"/>
</svg>
<div class="a rsbl" style="top:242px">Text Modifier</div>

<svg class="a" style="left:1864px;top:286px" width="21" height="21" viewBox="0 0 21 21">
  <path d="M10.5 0.5 C16.5 0.5 20.5 4.5 20.5 9 C20.5 12.5 18 13.5 15.5 13.2 C13.5 13 12.5 14.5 13.5 16.3 C14.5 18 13.8 20.5 11 20.5 C5 20.5 0.5 16 0.5 10.5 C0.5 5 5 0.5 10.5 0.5 Z" fill="#c7c5e4"/>
  <circle cx="4" cy="8" r="1.7" fill="#1d1c22"/><circle cx="7.3" cy="3.9" r="1.7" fill="#1d1c22"/><circle cx="12.4" cy="3.9" r="1.7" fill="#1d1c22"/><circle cx="16.3" cy="8" r="1.7" fill="#1d1c22"/>
</svg>
<div class="a rsbl" style="top:310px">Color</div>

<svg class="a" style="left:1864px;top:354px" width="21" height="21" viewBox="0 0 21 21">
  <circle cx="10.5" cy="10.3" r="9.2" fill="none" stroke="#c7c5e4" stroke-width="1.8"/>
  <path d="M10.5 1.1 A9.2 9.2 0 0 1 10.5 19.5 Z" fill="#c7c5e4"/>
</svg>
<div class="a rsbl" style="top:378px">Filter</div>

<svg class="a" style="left:1863px;top:420px" width="23" height="24" viewBox="0 0 23 24" fill="#c7c5e4">
  <path d="M16.5 5.5 L19.5 8.5 L6 22 L2.5 23 L3.5 19.5 Z"/>
  <path d="M17.7 4.3 L19.5 2.5 L22.5 5.5 L20.7 7.3 Z"/>
  <path d="M5 4 L5.9 6 L8 6.3 L6.4 7.7 L6.9 9.8 L5 8.7 L3.1 9.8 L3.6 7.7 L2 6.3 L4.1 6 Z"/>
  <path d="M11.5 0 L12.2 1.5 L13.8 1.7 L12.6 2.8 L13 4.4 L11.5 3.6 L10 4.4 L10.4 2.8 L9.2 1.7 L10.8 1.5 Z"/>
  <path d="M19.5 13.5 L20.2 15 L21.8 15.2 L20.6 16.3 L21 17.9 L19.5 17.1 L18 17.9 L18.4 16.3 L17.2 15.2 L18.8 15 Z"/>
</svg>
<div class="a rsbl" style="top:446px">Effect</div>

<svg class="a" style="left:1863px;top:489px" width="23" height="22" viewBox="0 0 23 22">
  <path d="M11.5 0.5 C17.8 0.5 22.5 5.3 22.5 11.5 C22.5 15.5 21.2 18.5 20 21 C18 18.5 15 17 11.5 17 C8 17 5 18.5 3 21 C1.8 18.5 0.5 15.5 0.5 11.5 C0.5 5.3 5.2 0.5 11.5 0.5 Z" fill="#c7c5e4"/>
  <g stroke="#1d1c22" stroke-width="1.6" stroke-linecap="round"><line x1="11.5" y1="3.5" x2="11.5" y2="5.5"/><line x1="5.8" y1="6" x2="7.2" y2="7.4"/><line x1="17.2" y1="6" x2="15.8" y2="7.4"/><line x1="3.5" y1="11.5" x2="5.5" y2="11.5"/><line x1="17.5" y1="11.5" x2="19.5" y2="11.5"/><line x1="11.5" y1="12.5" x2="14.5" y2="7.5" stroke-width="2"/></g>
  <circle cx="11.5" cy="12.5" r="2" fill="#1d1c22"/>
</svg>
<div class="a rsbl" style="top:514px">Speed</div>

<svg class="a" style="left:1864px;top:557px" width="22" height="22" viewBox="0 0 22 22" fill="#c7c5e4">
  <path d="M1 7.5 H5.5 L13 1.5 V20.5 L5.5 14.5 H1 Z"/>
  <rect x="16.3" y="6.2" width="1.8" height="9.6" rx="0.9"/>
</svg>
<div class="a rsbl" style="top:582px">Volume</div>


<!-- timeline -->
<div class="a" style="left:430px;top:619px;width:1059px;height:2px;background:#2a2935"></div>
<div class="a" style="left:430px;top:659px;width:1059px;height:2px;background:#2a2935"></div>
<div id="tools"></div>
<div class="a nowrap" style="left:927px;top:633px;font-size:13.1px;color:#c3c1d6;line-height:15px">00:08:45 / 02:23:38</div>
<div class="a ruler nowrap" style="left:440.7px;top:675px">0s</div>
<div class="a ruler nowrap" style="left:567.7px;top:675px">5s</div>
<div class="a ruler nowrap" style="left:694.5px;top:675px">10s</div>
<div class="a ruler nowrap" style="left:827.5px;top:675px">15s</div>
<div class="a ruler nowrap" style="left:960.9px;top:675px">20s</div>
<div class="a ruler nowrap" style="left:1095.9px;top:675px">25s</div>
<div class="a ruler nowrap" style="left:1229.7px;top:675px">30s</div>
<div class="a ruler nowrap" style="left:1364.9px;top:675px">35s</div>
<div class="a dot" style="left:476px"></div>
<div class="a dot" style="left:499px"></div>
<div class="a dot" style="left:522px"></div>
<div class="a dot" style="left:545px"></div>
<div class="a dot" style="left:603px"></div>
<div class="a dot" style="left:626px"></div>
<div class="a dot" style="left:649px"></div>
<div class="a dot" style="left:672px"></div>
<div class="a dot" style="left:736px"></div>
<div class="a dot" style="left:759px"></div>
<div class="a dot" style="left:782px"></div>
<div class="a dot" style="left:805px"></div>
<div class="a dot" style="left:869px"></div>
<div class="a dot" style="left:892px"></div>
<div class="a dot" style="left:915px"></div>
<div class="a dot" style="left:938px"></div>
<div class="a dot" style="left:1003px"></div>
<div class="a dot" style="left:1026px"></div>
<div class="a dot" style="left:1049px"></div>
<div class="a dot" style="left:1072px"></div>
<div class="a dot" style="left:1138px"></div>
<div class="a dot" style="left:1161px"></div>
<div class="a dot" style="left:1184px"></div>
<div class="a dot" style="left:1207px"></div>
<div class="a dot" style="left:1273px"></div>
<div class="a dot" style="left:1296px"></div>
<div class="a dot" style="left:1319px"></div>
<div class="a dot" style="left:1342px"></div>
<div class="a dot" style="left:1408px"></div>
<div class="a dot" style="left:1431px"></div>
<div class="a dot" style="left:1454px"></div>
<div class="a dot" style="left:1477px"></div>


<div class="a trk" style="left:441px;top:723px;width:1042px;height:26px"></div>
<div class="a trk" style="left:441px;top:757px;width:1042px;height:52px"></div>
<div class="a trk" style="left:441px;top:816px;width:1042px;height:27px"></div>

<div class="a" style="left:441px;top:723px;width:416px;height:26px;border-radius:4px;background:#86990e"></div>
<div class="a b nowrap" style="left:473px;top:728px;font-size:14.2px;color:#fff;line-height:17px">Think like a business analyst in tech</div>

<div class="a" style="left:441px;top:816px;width:959px;height:27px;border-radius:4px;background:#8f9868"></div>
<div class="a b nowrap" style="left:473px;top:822px;font-size:14.3px;color:#fff;line-height:17px">Coffee Shop 2</div>

<div id="clip"></div><div class="a" style="left:441px;top:757px;width:141px;height:52px;border:1.3px solid #f0f0f0;border-radius:4px;overflow:hidden;background:#e2dcd4">
<svg width="141" height="52" viewBox="0 0 141 52" style="display:block">
<defs><linearGradient id="clipwall" x1="0" y1="0" x2="1" y2="0"><stop offset="0" stop-color="#d9d0c6"/><stop offset="1" stop-color="#ebe4dc"/></linearGradient></defs>
<rect width="141" height="52" fill="url(#clipwall)"/>
<path d="M0 47 L141 33 L141 52 L0 52 Z" fill="#f2f2f2"/>
<path d="M10 45 C12 41 18 40 22 41 L22 46 Z" fill="#f7f7f7"/>
<path d="M41 38 C44 33 60 32 72 32 L82 32 C88 33 88 36 86 38 Z" fill="#f6f6f6"/>
<path d="M77 50 C75 44 76 38 78 34 L78 30 L82 30 L82 34 C84 38 85 44 83 50 Z" fill="#fbfbfb"/>
<g stroke="#4e7242" stroke-width="1" fill="none"><path d="M80 32 L80 10"/><path d="M80 22 L75 14"/><path d="M80 20 L85 12"/></g>
<g fill="#52763f"><ellipse cx="76" cy="22" rx="3" ry="1.6" transform="rotate(-30 76 22)"/><ellipse cx="84" cy="20" rx="3" ry="1.6" transform="rotate(30 84 20)"/><ellipse cx="77" cy="16" rx="2.6" ry="1.4" transform="rotate(-40 77 16)"/><ellipse cx="83" cy="26" rx="2.6" ry="1.4" transform="rotate(35 83 26)"/><ellipse cx="78" cy="28" rx="2.4" ry="1.3" transform="rotate(-30 78 28)"/></g>
<g fill="#f4f4ee"><circle cx="76" cy="8" r="2.2"/><circle cx="81" cy="6.5" r="2.4"/><circle cx="85" cy="10" r="2"/><circle cx="79" cy="12" r="1.8"/></g>
<rect x="0" y="0" width="23" height="52" fill="rgba(62,60,56,0.62)"/>
<rect x="117" y="0" width="24" height="52" fill="rgba(62,60,56,0.62)"/>
<rect x="7" y="16" width="2" height="19" fill="#fff"/><rect x="12" y="16" width="2" height="19" fill="#fff"/>
<rect x="125" y="16" width="2" height="19" fill="#fff"/><rect x="130" y="16" width="2" height="19" fill="#fff"/>
</svg></div><svg class="a" style="left:0;top:0" width="1920" height="900" viewBox="0 0 1920 900"><g fill="#f1f3e4" opacity="0.75"><rect x="578.0" y="827.6" width="0.9" height="3.8"/><rect x="579.0" y="827.4" width="0.9" height="4.2"/><rect x="580.0" y="827.3" width="0.9" height="4.5"/><rect x="581.0" y="826.8" width="0.9" height="5.4"/><rect x="582.0" y="826.8" width="0.9" height="5.4"/><rect x="583.0" y="825.5" width="0.9" height="7.9"/><rect x="584.0" y="827.5" width="0.9" height="4.0"/><rect x="585.0" y="825.0" width="0.9" height="9.0"/><rect x="586.0" y="821.9" width="0.9" height="15.2"/><rect x="587.0" y="823.4" width="0.9" height="12.1"/><rect x="588.0" y="823.0" width="0.9" height="12.9"/><rect x="589.0" y="827.2" width="0.9" height="4.7"/><rect x="590.0" y="826.8" width="0.9" height="5.5"/><rect x="591.0" y="827.8" width="0.9" height="3.4"/><rect x="592.0" y="827.4" width="0.9" height="4.2"/><rect x="593.0" y="827.3" width="0.9" height="4.5"/><rect x="594.0" y="828.2" width="0.9" height="2.6"/><rect x="595.0" y="827.1" width="0.9" height="4.8"/><rect x="596.0" y="826.0" width="0.9" height="7.0"/><rect x="597.0" y="821.3" width="0.9" height="16.4"/><rect x="598.0" y="820.5" width="0.9" height="18.0"/><rect x="599.0" y="824.1" width="0.9" height="10.7"/><rect x="600.0" y="819.2" width="0.9" height="20.6"/><rect x="601.0" y="824.8" width="0.9" height="9.4"/><rect x="602.0" y="823.0" width="0.9" height="13.0"/><rect x="603.0" y="826.7" width="0.9" height="5.7"/><rect x="604.0" y="827.8" width="0.9" height="3.4"/><rect x="605.0" y="826.1" width="0.9" height="6.8"/><rect x="606.0" y="828.0" width="0.9" height="3.0"/><rect x="607.0" y="828.0" width="0.9" height="2.9"/><rect x="608.0" y="826.2" width="0.9" height="6.6"/><rect x="609.0" y="825.7" width="0.9" height="7.7"/><rect x="610.0" y="826.5" width="0.9" height="5.9"/><rect x="611.0" y="822.8" width="0.9" height="13.5"/><rect x="612.0" y="824.0" width="0.9" height="11.0"/><rect x="613.0" y="823.3" width="0.9" height="12.4"/><rect x="614.0" y="826.2" width="0.9" height="6.7"/><rect x="615.0" y="824.2" width="0.9" height="10.6"/><rect x="616.0" y="826.2" width="0.9" height="6.7"/><rect x="617.0" y="826.3" width="0.9" height="6.4"/><rect x="618.0" y="826.9" width="0.9" height="5.2"/><rect x="619.0" y="828.1" width="0.9" height="2.8"/><rect x="620.0" y="828.0" width="0.9" height="3.0"/><rect x="621.0" y="828.4" width="0.9" height="2.3"/><rect x="622.0" y="828.4" width="0.9" height="2.2"/><rect x="623.0" y="828.5" width="0.9" height="2.0"/><rect x="624.0" y="828.0" width="0.9" height="3.0"/><rect x="625.0" y="827.2" width="0.9" height="4.6"/><rect x="626.0" y="828.1" width="0.9" height="2.7"/><rect x="627.0" y="825.5" width="0.9" height="8.0"/><rect x="628.0" y="825.8" width="0.9" height="7.4"/><rect x="629.0" y="825.3" width="0.9" height="8.5"/><rect x="630.0" y="822.5" width="0.9" height="14.1"/><rect x="631.0" y="824.7" width="0.9" height="9.6"/><rect x="632.0" y="826.2" width="0.9" height="6.6"/><rect x="633.0" y="826.5" width="0.9" height="6.0"/><rect x="634.0" y="826.7" width="0.9" height="5.7"/><rect x="635.0" y="828.3" width="0.9" height="2.3"/><rect x="636.0" y="826.5" width="0.9" height="5.9"/><rect x="637.0" y="828.2" width="0.9" height="2.5"/><rect x="638.0" y="825.8" width="0.9" height="7.4"/><rect x="639.0" y="824.1" width="0.9" height="10.8"/><rect x="640.0" y="826.6" width="0.9" height="5.8"/><rect x="641.0" y="820.8" width="0.9" height="17.4"/><rect x="642.0" y="822.7" width="0.9" height="13.6"/><rect x="643.0" y="820.8" width="0.9" height="17.4"/><rect x="644.0" y="825.6" width="0.9" height="7.9"/><rect x="645.0" y="826.0" width="0.9" height="7.1"/><rect x="646.0" y="826.1" width="0.9" height="6.7"/><rect x="647.0" y="824.4" width="0.9" height="10.3"/><rect x="648.0" y="827.6" width="0.9" height="3.8"/><rect x="649.0" y="826.8" width="0.9" height="5.4"/><rect x="650.0" y="826.7" width="0.9" height="5.7"/><rect x="651.0" y="826.4" width="0.9" height="6.1"/><rect x="652.0" y="827.3" width="0.9" height="4.4"/><rect x="653.0" y="826.6" width="0.9" height="5.9"/><rect x="654.0" y="825.0" width="0.9" height="9.0"/><rect x="655.0" y="823.0" width="0.9" height="13.1"/><rect x="656.0" y="826.1" width="0.9" height="6.7"/><rect x="657.0" y="823.4" width="0.9" height="12.2"/><rect x="658.0" y="824.4" width="0.9" height="10.3"/><rect x="659.0" y="825.4" width="0.9" height="8.2"/><rect x="660.0" y="828.2" width="0.9" height="2.6"/><rect x="661.0" y="826.7" width="0.9" height="5.6"/><rect x="662.0" y="828.4" width="0.9" height="2.2"/><rect x="663.0" y="828.1" width="0.9" height="2.9"/><rect x="664.0" y="827.6" width="0.9" height="3.7"/><rect x="665.0" y="827.1" width="0.9" height="4.8"/><rect x="666.0" y="828.0" width="0.9" height="2.9"/><rect x="667.0" y="827.0" width="0.9" height="5.0"/><rect x="668.0" y="827.4" width="0.9" height="4.1"/><rect x="669.0" y="827.5" width="0.9" height="3.9"/><rect x="670.0" y="826.9" width="0.9" height="5.2"/><rect x="671.0" y="826.7" width="0.9" height="5.7"/><rect x="672.0" y="826.5" width="0.9" height="5.9"/><rect x="673.0" y="825.9" width="0.9" height="7.1"/><rect x="674.0" y="823.4" width="0.9" height="12.1"/><rect x="675.0" y="823.1" width="0.9" height="12.7"/><rect x="676.0" y="827.3" width="0.9" height="4.5"/><rect x="677.0" y="828.1" width="0.9" height="2.9"/><rect x="678.0" y="826.4" width="0.9" height="6.2"/><rect x="679.0" y="827.4" width="0.9" height="4.1"/><rect x="680.0" y="827.5" width="0.9" height="4.0"/><rect x="681.0" y="827.4" width="0.9" height="4.1"/><rect x="682.0" y="825.5" width="0.9" height="8.1"/><rect x="683.0" y="823.0" width="0.9" height="13.1"/><rect x="684.0" y="823.4" width="0.9" height="12.3"/><rect x="685.0" y="822.5" width="0.9" height="14.0"/><rect x="686.0" y="824.9" width="0.9" height="9.3"/><rect x="687.0" y="818.6" width="0.9" height="21.7"/><rect x="688.0" y="825.8" width="0.9" height="7.4"/><rect x="689.0" y="824.3" width="0.9" height="10.5"/><rect x="690.0" y="824.3" width="0.9" height="10.4"/><rect x="691.0" y="827.6" width="0.9" height="3.7"/><rect x="692.0" y="826.7" width="0.9" height="5.6"/><rect x="693.0" y="826.6" width="0.9" height="5.8"/><rect x="694.0" y="827.2" width="0.9" height="4.6"/><rect x="695.0" y="826.4" width="0.9" height="6.2"/><rect x="696.0" y="827.5" width="0.9" height="3.9"/><rect x="697.0" y="825.7" width="0.9" height="7.7"/><rect x="698.0" y="826.2" width="0.9" height="6.6"/><rect x="699.0" y="822.3" width="0.9" height="14.4"/><rect x="700.0" y="825.4" width="0.9" height="8.2"/><rect x="701.0" y="825.4" width="0.9" height="8.2"/><rect x="702.0" y="824.6" width="0.9" height="9.8"/><rect x="703.0" y="826.1" width="0.9" height="6.8"/><rect x="704.0" y="826.5" width="0.9" height="6.0"/><rect x="705.0" y="827.8" width="0.9" height="3.5"/><rect x="706.0" y="827.8" width="0.9" height="3.4"/><rect x="707.0" y="827.4" width="0.9" height="4.1"/><rect x="708.0" y="827.8" width="0.9" height="3.3"/><rect x="709.0" y="828.1" width="0.9" height="2.7"/><rect x="710.0" y="827.9" width="0.9" height="3.2"/><rect x="711.0" y="828.2" width="0.9" height="2.5"/><rect x="712.0" y="827.5" width="0.9" height="4.0"/><rect x="713.0" y="825.3" width="0.9" height="8.5"/><rect x="714.0" y="824.0" width="0.9" height="11.0"/><rect x="715.0" y="824.2" width="0.9" height="10.7"/><rect x="716.0" y="824.2" width="0.9" height="10.7"/><rect x="717.0" y="825.0" width="0.9" height="8.9"/><rect x="718.0" y="826.7" width="0.9" height="5.5"/><rect x="719.0" y="826.7" width="0.9" height="5.6"/><rect x="720.0" y="826.0" width="0.9" height="7.0"/><rect x="721.0" y="826.5" width="0.9" height="6.0"/><rect x="722.0" y="827.8" width="0.9" height="3.5"/><rect x="723.0" y="826.8" width="0.9" height="5.4"/><rect x="724.0" y="826.3" width="0.9" height="6.5"/><rect x="725.0" y="825.5" width="0.9" height="8.0"/><rect x="726.0" y="824.2" width="0.9" height="10.6"/><rect x="727.0" y="822.0" width="0.9" height="15.0"/><rect x="728.0" y="823.2" width="0.9" height="12.7"/><rect x="729.0" y="819.9" width="0.9" height="19.2"/><rect x="730.0" y="823.2" width="0.9" height="12.5"/><rect x="731.0" y="822.5" width="0.9" height="13.9"/><rect x="732.0" y="822.3" width="0.9" height="14.4"/><rect x="733.0" y="824.4" width="0.9" height="10.2"/><rect x="734.0" y="827.0" width="0.9" height="5.1"/><rect x="735.0" y="826.0" width="0.9" height="7.0"/><rect x="736.0" y="827.1" width="0.9" height="4.7"/><rect x="737.0" y="827.3" width="0.9" height="4.4"/><rect x="738.0" y="828.3" width="0.9" height="2.4"/><rect x="739.0" y="826.5" width="0.9" height="6.1"/><rect x="740.0" y="826.6" width="0.9" height="5.8"/><rect x="741.0" y="824.0" width="0.9" height="11.1"/><rect x="742.0" y="824.3" width="0.9" height="10.3"/><rect x="743.0" y="822.6" width="0.9" height="13.8"/><rect x="744.0" y="824.3" width="0.9" height="10.5"/><rect x="745.0" y="824.9" width="0.9" height="9.3"/><rect x="746.0" y="827.2" width="0.9" height="4.7"/><rect x="747.0" y="827.0" width="0.9" height="4.9"/><rect x="748.0" y="827.2" width="0.9" height="4.6"/><rect x="749.0" y="827.2" width="0.9" height="4.6"/><rect x="750.0" y="828.0" width="0.9" height="2.9"/><rect x="751.0" y="827.3" width="0.9" height="4.5"/><rect x="752.0" y="827.2" width="0.9" height="4.6"/><rect x="753.0" y="827.5" width="0.9" height="4.1"/><rect x="754.0" y="826.8" width="0.9" height="5.4"/><rect x="755.0" y="826.5" width="0.9" height="6.1"/><rect x="756.0" y="826.8" width="0.9" height="5.4"/><rect x="757.0" y="825.9" width="0.9" height="7.2"/><rect x="758.0" y="826.5" width="0.9" height="6.1"/><rect x="759.0" y="822.6" width="0.9" height="13.8"/><rect x="760.0" y="821.9" width="0.9" height="15.3"/><rect x="761.0" y="824.8" width="0.9" height="9.5"/><rect x="762.0" y="824.9" width="0.9" height="9.2"/><rect x="763.0" y="825.9" width="0.9" height="7.2"/><rect x="764.0" y="826.7" width="0.9" height="5.7"/><rect x="765.0" y="828.1" width="0.9" height="2.8"/><rect x="766.0" y="826.9" width="0.9" height="5.2"/><rect x="767.0" y="826.9" width="0.9" height="5.1"/><rect x="768.0" y="825.9" width="0.9" height="7.1"/><rect x="769.0" y="825.6" width="0.9" height="7.7"/><rect x="770.0" y="823.3" width="0.9" height="12.4"/><rect x="771.0" y="820.7" width="0.9" height="17.5"/><rect x="772.0" y="820.6" width="0.9" height="17.9"/><rect x="773.0" y="819.7" width="0.9" height="19.5"/><rect x="774.0" y="825.5" width="0.9" height="8.1"/><rect x="775.0" y="825.4" width="0.9" height="8.3"/><rect x="776.0" y="825.1" width="0.9" height="8.9"/><rect x="777.0" y="825.5" width="0.9" height="7.9"/><rect x="778.0" y="827.6" width="0.9" height="3.8"/><rect x="779.0" y="827.0" width="0.9" height="5.1"/><rect x="780.0" y="827.2" width="0.9" height="4.5"/><rect x="781.0" y="828.3" width="0.9" height="2.4"/><rect x="782.0" y="826.9" width="0.9" height="5.2"/><rect x="783.0" y="826.9" width="0.9" height="5.2"/><rect x="784.0" y="826.9" width="0.9" height="5.1"/><rect x="785.0" y="826.1" width="0.9" height="6.8"/><rect x="786.0" y="825.1" width="0.9" height="8.8"/><rect x="787.0" y="826.1" width="0.9" height="6.7"/><rect x="788.0" y="826.8" width="0.9" height="5.5"/><rect x="789.0" y="827.9" width="0.9" height="3.3"/><rect x="790.0" y="827.3" width="0.9" height="4.4"/><rect x="791.0" y="827.8" width="0.9" height="3.4"/><rect x="792.0" y="827.5" width="0.9" height="3.9"/><rect x="793.0" y="827.6" width="0.9" height="3.7"/><rect x="794.0" y="828.2" width="0.9" height="2.5"/><rect x="795.0" y="827.1" width="0.9" height="4.7"/><rect x="796.0" y="828.6" width="0.9" height="1.8"/><rect x="797.0" y="827.9" width="0.9" height="3.3"/><rect x="798.0" y="827.9" width="0.9" height="3.2"/><rect x="799.0" y="827.2" width="0.9" height="4.5"/><rect x="800.0" y="827.5" width="0.9" height="4.1"/><rect x="801.0" y="824.0" width="0.9" height="11.1"/><rect x="802.0" y="825.1" width="0.9" height="8.9"/><rect x="803.0" y="826.5" width="0.9" height="6.0"/><rect x="804.0" y="823.9" width="0.9" height="11.2"/><rect x="805.0" y="826.9" width="0.9" height="5.1"/><rect x="806.0" y="826.1" width="0.9" height="6.8"/><rect x="807.0" y="827.4" width="0.9" height="4.2"/><rect x="808.0" y="827.3" width="0.9" height="4.5"/><rect x="809.0" y="826.6" width="0.9" height="5.8"/><rect x="810.0" y="826.6" width="0.9" height="5.9"/><rect x="811.0" y="826.9" width="0.9" height="5.2"/><rect x="812.0" y="824.5" width="0.9" height="9.9"/><rect x="813.0" y="823.7" width="0.9" height="11.7"/><rect x="814.0" y="823.8" width="0.9" height="11.5"/><rect x="815.0" y="824.5" width="0.9" height="10.1"/><rect x="816.0" y="820.7" width="0.9" height="17.7"/><rect x="817.0" y="821.4" width="0.9" height="16.3"/><rect x="818.0" y="820.1" width="0.9" height="18.9"/><rect x="819.0" y="822.1" width="0.9" height="14.9"/><rect x="820.0" y="825.3" width="0.9" height="8.4"/><rect x="821.0" y="827.1" width="0.9" height="4.8"/><rect x="822.0" y="826.4" width="0.9" height="6.2"/><rect x="823.0" y="828.5" width="0.9" height="2.1"/><rect x="824.0" y="828.2" width="0.9" height="2.6"/><rect x="825.0" y="826.9" width="0.9" height="5.3"/><rect x="826.0" y="825.9" width="0.9" height="7.2"/><rect x="827.0" y="826.8" width="0.9" height="5.5"/><rect x="828.0" y="823.8" width="0.9" height="11.4"/><rect x="829.0" y="822.1" width="0.9" height="14.9"/><rect x="830.0" y="825.0" width="0.9" height="8.9"/><rect x="831.0" y="825.6" width="0.9" height="7.8"/><rect x="832.0" y="827.1" width="0.9" height="4.8"/><rect x="833.0" y="827.5" width="0.9" height="3.9"/><rect x="834.0" y="826.6" width="0.9" height="5.9"/><rect x="835.0" y="827.9" width="0.9" height="3.2"/><rect x="836.0" y="827.0" width="0.9" height="5.0"/><rect x="837.0" y="827.1" width="0.9" height="4.7"/><rect x="838.0" y="827.7" width="0.9" height="3.7"/><rect x="839.0" y="828.2" width="0.9" height="2.6"/><rect x="840.0" y="826.9" width="0.9" height="5.2"/><rect x="841.0" y="827.6" width="0.9" height="3.8"/><rect x="842.0" y="827.4" width="0.9" height="4.2"/><rect x="843.0" y="827.0" width="0.9" height="4.9"/><rect x="844.0" y="823.8" width="0.9" height="11.4"/><rect x="845.0" y="824.7" width="0.9" height="9.6"/><rect x="846.0" y="825.2" width="0.9" height="8.5"/><rect x="847.0" y="824.4" width="0.9" height="10.2"/><rect x="848.0" y="826.6" width="0.9" height="5.7"/><rect x="849.0" y="825.6" width="0.9" height="7.9"/><rect x="850.0" y="827.0" width="0.9" height="5.1"/><rect x="851.0" y="827.8" width="0.9" height="3.5"/><rect x="852.0" y="827.0" width="0.9" height="5.1"/><rect x="853.0" y="826.7" width="0.9" height="5.6"/><rect x="854.0" y="828.1" width="0.9" height="2.8"/><rect x="855.0" y="825.9" width="0.9" height="7.2"/><rect x="856.0" y="825.8" width="0.9" height="7.4"/><rect x="857.0" y="820.8" width="0.9" height="17.4"/><rect x="858.0" y="820.1" width="0.9" height="18.8"/><rect x="859.0" y="823.4" width="0.9" height="12.2"/><rect x="860.0" y="823.4" width="0.9" height="12.2"/><rect x="861.0" y="824.9" width="0.9" height="9.3"/><rect x="862.0" y="821.3" width="0.9" height="16.3"/><rect x="863.0" y="826.2" width="0.9" height="6.7"/><rect x="864.0" y="826.1" width="0.9" height="6.8"/><rect x="865.0" y="827.2" width="0.9" height="4.7"/><rect x="866.0" y="827.2" width="0.9" height="4.7"/><rect x="867.0" y="827.3" width="0.9" height="4.5"/><rect x="868.0" y="826.6" width="0.9" height="5.8"/><rect x="869.0" y="827.6" width="0.9" height="3.8"/><rect x="870.0" y="824.6" width="0.9" height="9.8"/><rect x="871.0" y="825.6" width="0.9" height="7.8"/><rect x="872.0" y="824.0" width="0.9" height="11.1"/><rect x="873.0" y="825.1" width="0.9" height="8.8"/><rect x="874.0" y="825.9" width="0.9" height="7.2"/><rect x="875.0" y="825.9" width="0.9" height="7.2"/><rect x="876.0" y="826.9" width="0.9" height="5.1"/><rect x="877.0" y="827.7" width="0.9" height="3.7"/><rect x="878.0" y="827.2" width="0.9" height="4.6"/><rect x="879.0" y="827.6" width="0.9" height="3.8"/><rect x="880.0" y="828.6" width="0.9" height="1.9"/><rect x="881.0" y="828.2" width="0.9" height="2.6"/><rect x="882.0" y="827.9" width="0.9" height="3.3"/><rect x="883.0" y="827.1" width="0.9" height="4.9"/><rect x="884.0" y="826.9" width="0.9" height="5.1"/><rect x="885.0" y="827.2" width="0.9" height="4.5"/><rect x="886.0" y="828.0" width="0.9" height="2.9"/><rect x="887.0" y="824.9" width="0.9" height="9.1"/><rect x="888.0" y="825.2" width="0.9" height="8.5"/><rect x="889.0" y="823.8" width="0.9" height="11.3"/><rect x="890.0" y="823.1" width="0.9" height="12.8"/><rect x="891.0" y="824.1" width="0.9" height="10.7"/><rect x="892.0" y="825.8" width="0.9" height="7.5"/><rect x="893.0" y="825.5" width="0.9" height="8.1"/><rect x="894.0" y="827.5" width="0.9" height="4.1"/><rect x="895.0" y="827.7" width="0.9" height="3.6"/><rect x="896.0" y="826.7" width="0.9" height="5.5"/><rect x="897.0" y="827.8" width="0.9" height="3.4"/><rect x="898.0" y="826.9" width="0.9" height="5.1"/><rect x="899.0" y="823.8" width="0.9" height="11.3"/><rect x="900.0" y="826.2" width="0.9" height="6.6"/><rect x="901.0" y="820.2" width="0.9" height="18.7"/><rect x="902.0" y="820.1" width="0.9" height="18.9"/><rect x="903.0" y="822.0" width="0.9" height="15.0"/><rect x="904.0" y="823.7" width="0.9" height="11.6"/><rect x="905.0" y="821.9" width="0.9" height="15.2"/><rect x="906.0" y="823.1" width="0.9" height="12.7"/><rect x="907.0" y="827.3" width="0.9" height="4.4"/><rect x="908.0" y="827.0" width="0.9" height="5.0"/><rect x="909.0" y="827.3" width="0.9" height="4.4"/><rect x="910.0" y="827.5" width="0.9" height="4.0"/><rect x="911.0" y="827.7" width="0.9" height="3.7"/><rect x="912.0" y="827.7" width="0.9" height="3.7"/><rect x="913.0" y="825.6" width="0.9" height="7.8"/><rect x="914.0" y="823.5" width="0.9" height="11.9"/><rect x="915.0" y="826.4" width="0.9" height="6.2"/><rect x="916.0" y="825.5" width="0.9" height="7.9"/><rect x="917.0" y="823.3" width="0.9" height="12.4"/><rect x="918.0" y="824.6" width="0.9" height="9.7"/><rect x="919.0" y="826.2" width="0.9" height="6.7"/><rect x="920.0" y="828.3" width="0.9" height="2.4"/><rect x="921.0" y="827.2" width="0.9" height="4.6"/><rect x="922.0" y="826.9" width="0.9" height="5.1"/><rect x="923.0" y="827.0" width="0.9" height="5.0"/><rect x="924.0" y="827.5" width="0.9" height="4.0"/><rect x="925.0" y="828.5" width="0.9" height="1.9"/><rect x="926.0" y="827.2" width="0.9" height="4.6"/><rect x="927.0" y="828.2" width="0.9" height="2.6"/><rect x="928.0" y="827.2" width="0.9" height="4.7"/><rect x="929.0" y="825.9" width="0.9" height="7.3"/><rect x="930.0" y="825.5" width="0.9" height="8.0"/><rect x="931.0" y="826.7" width="0.9" height="5.6"/><rect x="932.0" y="825.4" width="0.9" height="8.2"/><rect x="933.0" y="821.9" width="0.9" height="15.1"/><rect x="934.0" y="826.2" width="0.9" height="6.6"/><rect x="935.0" y="825.0" width="0.9" height="9.1"/><rect x="936.0" y="826.6" width="0.9" height="5.8"/><rect x="937.0" y="827.9" width="0.9" height="3.3"/><rect x="938.0" y="827.2" width="0.9" height="4.6"/><rect x="939.0" y="828.4" width="0.9" height="2.3"/><rect x="940.0" y="828.1" width="0.9" height="2.9"/><rect x="941.0" y="826.9" width="0.9" height="5.1"/><rect x="942.0" y="827.2" width="0.9" height="4.6"/><rect x="943.0" y="826.5" width="0.9" height="6.0"/><rect x="944.0" y="822.3" width="0.9" height="14.3"/><rect x="945.0" y="819.9" width="0.9" height="19.1"/><rect x="946.0" y="818.5" width="0.9" height="22.1"/><rect x="947.0" y="824.6" width="0.9" height="9.8"/><rect x="948.0" y="823.5" width="0.9" height="12.0"/><rect x="949.0" y="825.4" width="0.9" height="8.2"/><rect x="950.0" y="825.5" width="0.9" height="8.1"/><rect x="951.0" y="826.8" width="0.9" height="5.5"/><rect x="952.0" y="826.4" width="0.9" height="6.3"/><rect x="953.0" y="827.7" width="0.9" height="3.5"/><rect x="954.0" y="828.3" width="0.9" height="2.4"/><rect x="955.0" y="826.5" width="0.9" height="6.1"/><rect x="956.0" y="827.3" width="0.9" height="4.4"/><rect x="957.0" y="824.7" width="0.9" height="9.7"/><rect x="958.0" y="824.4" width="0.9" height="10.3"/><rect x="959.0" y="822.0" width="0.9" height="15.1"/><rect x="960.0" y="824.3" width="0.9" height="10.5"/><rect x="961.0" y="824.9" width="0.9" height="9.2"/><rect x="962.0" y="827.1" width="0.9" height="4.8"/><rect x="963.0" y="827.0" width="0.9" height="5.1"/><rect x="964.0" y="828.0" width="0.9" height="3.0"/><rect x="965.0" y="827.3" width="0.9" height="4.4"/><rect x="966.0" y="827.8" width="0.9" height="3.5"/><rect x="967.0" y="828.4" width="0.9" height="2.2"/><rect x="968.0" y="828.2" width="0.9" height="2.5"/><rect x="969.0" y="828.0" width="0.9" height="3.0"/><rect x="970.0" y="827.3" width="0.9" height="4.4"/><rect x="971.0" y="828.2" width="0.9" height="2.7"/><rect x="972.0" y="826.7" width="0.9" height="5.7"/><rect x="973.0" y="826.0" width="0.9" height="7.0"/><rect x="974.0" y="827.1" width="0.9" height="4.8"/><rect x="975.0" y="823.8" width="0.9" height="11.4"/><rect x="976.0" y="826.2" width="0.9" height="6.5"/><rect x="977.0" y="826.2" width="0.9" height="6.6"/><rect x="978.0" y="824.7" width="0.9" height="9.6"/><rect x="979.0" y="826.9" width="0.9" height="5.1"/><rect x="980.0" y="825.9" width="0.9" height="7.1"/><rect x="981.0" y="827.4" width="0.9" height="4.2"/><rect x="982.0" y="827.8" width="0.9" height="3.3"/><rect x="983.0" y="826.7" width="0.9" height="5.6"/><rect x="984.0" y="828.0" width="0.9" height="2.9"/><rect x="985.0" y="825.1" width="0.9" height="8.7"/><rect x="986.0" y="826.7" width="0.9" height="5.5"/><rect x="987.0" y="825.3" width="0.9" height="8.3"/><rect x="988.0" y="818.7" width="0.9" height="21.5"/><rect x="989.0" y="820.0" width="0.9" height="19.0"/><rect x="990.0" y="823.8" width="0.9" height="11.5"/><rect x="991.0" y="825.2" width="0.9" height="8.6"/><rect x="992.0" y="821.6" width="0.9" height="15.8"/><rect x="993.0" y="824.8" width="0.9" height="9.4"/><rect x="994.0" y="825.6" width="0.9" height="7.8"/><rect x="995.0" y="828.0" width="0.9" height="3.1"/><rect x="996.0" y="827.2" width="0.9" height="4.6"/><rect x="997.0" y="827.7" width="0.9" height="3.5"/><rect x="998.0" y="827.7" width="0.9" height="3.5"/><rect x="999.0" y="826.9" width="0.9" height="5.1"/><rect x="1000.0" y="825.1" width="0.9" height="8.9"/><rect x="1001.0" y="825.3" width="0.9" height="8.4"/><rect x="1002.0" y="824.7" width="0.9" height="9.6"/><rect x="1003.0" y="826.1" width="0.9" height="6.7"/><rect x="1004.0" y="823.7" width="0.9" height="11.6"/><rect x="1005.0" y="825.6" width="0.9" height="7.8"/><rect x="1006.0" y="826.1" width="0.9" height="6.7"/><rect x="1007.0" y="827.6" width="0.9" height="3.9"/><rect x="1008.0" y="827.1" width="0.9" height="4.9"/><rect x="1009.0" y="827.7" width="0.9" height="3.5"/><rect x="1010.0" y="827.7" width="0.9" height="3.7"/><rect x="1011.0" y="827.7" width="0.9" height="3.6"/><rect x="1012.0" y="827.4" width="0.9" height="4.2"/><rect x="1013.0" y="827.9" width="0.9" height="3.1"/><rect x="1014.0" y="828.3" width="0.9" height="2.3"/><rect x="1015.0" y="828.3" width="0.9" height="2.4"/><rect x="1016.0" y="827.5" width="0.9" height="4.0"/><rect x="1017.0" y="827.4" width="0.9" height="4.1"/><rect x="1018.0" y="823.1" width="0.9" height="12.8"/><rect x="1019.0" y="824.3" width="0.9" height="10.4"/><rect x="1020.0" y="822.9" width="0.9" height="13.3"/><rect x="1021.0" y="827.1" width="0.9" height="4.8"/><rect x="1022.0" y="825.9" width="0.9" height="7.2"/><rect x="1023.0" y="825.6" width="0.9" height="7.8"/><rect x="1024.0" y="827.0" width="0.9" height="5.0"/><rect x="1025.0" y="827.6" width="0.9" height="3.7"/><rect x="1026.0" y="827.5" width="0.9" height="4.0"/><rect x="1027.0" y="828.0" width="0.9" height="3.1"/><rect x="1028.0" y="827.3" width="0.9" height="4.4"/><rect x="1029.0" y="826.5" width="0.9" height="6.0"/><rect x="1030.0" y="824.4" width="0.9" height="10.3"/><rect x="1031.0" y="823.1" width="0.9" height="12.8"/><rect x="1032.0" y="818.6" width="0.9" height="21.8"/><rect x="1033.0" y="824.2" width="0.9" height="10.6"/><rect x="1034.0" y="824.0" width="0.9" height="11.0"/><rect x="1035.0" y="824.9" width="0.9" height="9.2"/><rect x="1036.0" y="826.5" width="0.9" height="6.0"/><rect x="1037.0" y="826.9" width="0.9" height="5.2"/><rect x="1038.0" y="827.6" width="0.9" height="3.7"/><rect x="1039.0" y="827.4" width="0.9" height="4.1"/><rect x="1040.0" y="828.4" width="0.9" height="2.2"/><rect x="1041.0" y="826.3" width="0.9" height="6.3"/><rect x="1042.0" y="827.0" width="0.9" height="4.9"/><rect x="1043.0" y="824.2" width="0.9" height="10.5"/><rect x="1044.0" y="824.0" width="0.9" height="11.0"/><rect x="1045.0" y="823.3" width="0.9" height="12.4"/><rect x="1046.0" y="824.3" width="0.9" height="10.3"/><rect x="1047.0" y="822.8" width="0.9" height="13.3"/><rect x="1048.0" y="827.2" width="0.9" height="4.7"/><rect x="1049.0" y="826.2" width="0.9" height="6.5"/><rect x="1050.0" y="827.7" width="0.9" height="3.5"/><rect x="1051.0" y="827.3" width="0.9" height="4.4"/><rect x="1052.0" y="827.4" width="0.9" height="4.3"/><rect x="1053.0" y="828.3" width="0.9" height="2.3"/><rect x="1054.0" y="828.3" width="0.9" height="2.4"/><rect x="1055.0" y="828.6" width="0.9" height="1.8"/><rect x="1056.0" y="828.2" width="0.9" height="2.6"/><rect x="1057.0" y="828.4" width="0.9" height="2.2"/><rect x="1058.0" y="827.6" width="0.9" height="3.8"/><rect x="1059.0" y="825.7" width="0.9" height="7.6"/><rect x="1060.0" y="826.5" width="0.9" height="5.9"/><rect x="1061.0" y="825.9" width="0.9" height="7.2"/><rect x="1062.0" y="824.5" width="0.9" height="10.0"/><rect x="1063.0" y="825.2" width="0.9" height="8.5"/><rect x="1064.0" y="823.5" width="0.9" height="12.0"/><rect x="1065.0" y="824.7" width="0.9" height="9.7"/><rect x="1066.0" y="827.4" width="0.9" height="4.1"/><rect x="1067.0" y="827.7" width="0.9" height="3.6"/><rect x="1068.0" y="827.1" width="0.9" height="4.8"/><rect x="1069.0" y="826.6" width="0.9" height="5.8"/><rect x="1070.0" y="826.8" width="0.9" height="5.3"/><rect x="1071.0" y="826.7" width="0.9" height="5.6"/><rect x="1072.0" y="823.6" width="0.9" height="11.8"/><rect x="1073.0" y="826.7" width="0.9" height="5.7"/><rect x="1074.0" y="825.6" width="0.9" height="7.9"/><rect x="1075.0" y="819.6" width="0.9" height="19.9"/><rect x="1076.0" y="822.1" width="0.9" height="14.8"/><rect x="1077.0" y="825.3" width="0.9" height="8.4"/><rect x="1078.0" y="822.9" width="0.9" height="13.1"/><rect x="1079.0" y="822.4" width="0.9" height="14.3"/><rect x="1080.0" y="825.9" width="0.9" height="7.3"/><rect x="1081.0" y="827.2" width="0.9" height="4.6"/><rect x="1082.0" y="828.2" width="0.9" height="2.6"/><rect x="1083.0" y="828.3" width="0.9" height="2.4"/><rect x="1084.0" y="826.5" width="0.9" height="5.9"/><rect x="1085.0" y="826.9" width="0.9" height="5.2"/><rect x="1086.0" y="824.6" width="0.9" height="9.7"/><rect x="1087.0" y="827.0" width="0.9" height="5.0"/><rect x="1088.0" y="825.6" width="0.9" height="7.8"/><rect x="1089.0" y="826.4" width="0.9" height="6.1"/><rect x="1090.0" y="825.1" width="0.9" height="8.9"/><rect x="1091.0" y="827.2" width="0.9" height="4.6"/><rect x="1092.0" y="827.2" width="0.9" height="4.7"/><rect x="1093.0" y="827.4" width="0.9" height="4.3"/><rect x="1094.0" y="827.9" width="0.9" height="3.2"/><rect x="1095.0" y="828.5" width="0.9" height="2.0"/><rect x="1096.0" y="828.6" width="0.9" height="1.9"/><rect x="1097.0" y="827.0" width="0.9" height="4.9"/><rect x="1098.0" y="828.3" width="0.9" height="2.3"/><rect x="1099.0" y="827.8" width="0.9" height="3.5"/><rect x="1100.0" y="827.9" width="0.9" height="3.2"/><rect x="1101.0" y="827.5" width="0.9" height="4.1"/><rect x="1102.0" y="828.1" width="0.9" height="2.9"/><rect x="1103.0" y="826.9" width="0.9" height="5.2"/><rect x="1104.0" y="826.9" width="0.9" height="5.1"/><rect x="1105.0" y="824.3" width="0.9" height="10.4"/><rect x="1106.0" y="821.9" width="0.9" height="15.2"/><rect x="1107.0" y="823.9" width="0.9" height="11.2"/><rect x="1108.0" y="823.7" width="0.9" height="11.5"/><rect x="1109.0" y="827.1" width="0.9" height="4.8"/><rect x="1110.0" y="828.1" width="0.9" height="2.7"/><rect x="1111.0" y="827.3" width="0.9" height="4.4"/><rect x="1112.0" y="827.5" width="0.9" height="4.0"/><rect x="1113.0" y="827.1" width="0.9" height="4.7"/><rect x="1114.0" y="827.1" width="0.9" height="4.9"/><rect x="1115.0" y="825.4" width="0.9" height="8.3"/><rect x="1116.0" y="823.4" width="0.9" height="12.1"/><rect x="1117.0" y="820.5" width="0.9" height="17.9"/><rect x="1118.0" y="823.3" width="0.9" height="12.4"/><rect x="1119.0" y="821.8" width="0.9" height="15.4"/><rect x="1120.0" y="819.3" width="0.9" height="20.4"/><rect x="1121.0" y="824.6" width="0.9" height="9.8"/><rect x="1122.0" y="826.2" width="0.9" height="6.6"/><rect x="1123.0" y="826.3" width="0.9" height="6.4"/><rect x="1124.0" y="827.7" width="0.9" height="3.5"/><rect x="1125.0" y="826.6" width="0.9" height="5.8"/><rect x="1126.0" y="826.9" width="0.9" height="5.3"/><rect x="1127.0" y="827.8" width="0.9" height="3.4"/><rect x="1128.0" y="827.9" width="0.9" height="3.1"/><rect x="1129.0" y="827.6" width="0.9" height="3.8"/><rect x="1130.0" y="826.4" width="0.9" height="6.2"/><rect x="1131.0" y="826.5" width="0.9" height="6.0"/><rect x="1132.0" y="824.5" width="0.9" height="10.1"/><rect x="1133.0" y="824.0" width="0.9" height="11.0"/><rect x="1134.0" y="826.3" width="0.9" height="6.5"/><rect x="1135.0" y="827.6" width="0.9" height="3.8"/><rect x="1136.0" y="826.5" width="0.9" height="6.0"/><rect x="1137.0" y="828.3" width="0.9" height="2.3"/><rect x="1138.0" y="828.2" width="0.9" height="2.6"/><rect x="1139.0" y="828.1" width="0.9" height="2.7"/><rect x="1140.0" y="828.0" width="0.9" height="3.0"/><rect x="1141.0" y="828.5" width="0.9" height="2.1"/><rect x="1142.0" y="827.9" width="0.9" height="3.1"/><rect x="1143.0" y="828.1" width="0.9" height="2.9"/><rect x="1144.0" y="827.1" width="0.9" height="4.7"/><rect x="1145.0" y="827.1" width="0.9" height="4.7"/><rect x="1146.0" y="825.5" width="0.9" height="8.0"/><rect x="1147.0" y="825.1" width="0.9" height="8.7"/><rect x="1148.0" y="823.6" width="0.9" height="11.9"/><rect x="1149.0" y="823.8" width="0.9" height="11.5"/><rect x="1150.0" y="824.5" width="0.9" height="10.0"/><rect x="1151.0" y="823.5" width="0.9" height="12.0"/><rect x="1152.0" y="825.4" width="0.9" height="8.3"/><rect x="1153.0" y="825.5" width="0.9" height="7.9"/><rect x="1154.0" y="826.8" width="0.9" height="5.4"/><rect x="1155.0" y="827.1" width="0.9" height="4.8"/><rect x="1156.0" y="827.9" width="0.9" height="3.3"/><rect x="1157.0" y="826.2" width="0.9" height="6.6"/><rect x="1158.0" y="826.5" width="0.9" height="6.0"/><rect x="1159.0" y="826.6" width="0.9" height="5.9"/><rect x="1160.0" y="826.0" width="0.9" height="7.0"/><rect x="1161.0" y="824.5" width="0.9" height="9.9"/><rect x="1162.0" y="823.3" width="0.9" height="12.4"/><rect x="1163.0" y="820.2" width="0.9" height="18.6"/><rect x="1164.0" y="823.9" width="0.9" height="11.2"/><rect x="1165.0" y="826.2" width="0.9" height="6.6"/><rect x="1166.0" y="824.1" width="0.9" height="10.8"/><rect x="1167.0" y="826.2" width="0.9" height="6.7"/><rect x="1168.0" y="828.2" width="0.9" height="2.7"/><rect x="1169.0" y="828.3" width="0.9" height="2.3"/><rect x="1170.0" y="828.2" width="0.9" height="2.6"/><rect x="1171.0" y="827.5" width="0.9" height="3.9"/><rect x="1172.0" y="825.6" width="0.9" height="7.8"/><rect x="1173.0" y="824.0" width="0.9" height="10.9"/><rect x="1174.0" y="824.2" width="0.9" height="10.5"/><rect x="1175.0" y="825.5" width="0.9" height="7.9"/><rect x="1176.0" y="824.6" width="0.9" height="9.8"/><rect x="1177.0" y="825.5" width="0.9" height="7.9"/><rect x="1178.0" y="826.5" width="0.9" height="6.0"/><rect x="1179.0" y="828.0" width="0.9" height="2.9"/><rect x="1180.0" y="827.2" width="0.9" height="4.7"/><rect x="1181.0" y="827.1" width="0.9" height="4.9"/><rect x="1182.0" y="827.4" width="0.9" height="4.2"/><rect x="1183.0" y="828.5" width="0.9" height="2.1"/><rect x="1184.0" y="827.8" width="0.9" height="3.5"/><rect x="1185.0" y="828.3" width="0.9" height="2.3"/><rect x="1186.0" y="827.4" width="0.9" height="4.2"/><rect x="1187.0" y="827.8" width="0.9" height="3.5"/><rect x="1188.0" y="826.5" width="0.9" height="6.0"/><rect x="1189.0" y="826.1" width="0.9" height="6.8"/><rect x="1190.0" y="827.3" width="0.9" height="4.4"/><rect x="1191.0" y="825.8" width="0.9" height="7.4"/><rect x="1192.0" y="822.2" width="0.9" height="14.6"/><rect x="1193.0" y="824.3" width="0.9" height="10.3"/><rect x="1194.0" y="825.0" width="0.9" height="9.1"/><rect x="1195.0" y="825.8" width="0.9" height="7.4"/><rect x="1196.0" y="825.8" width="0.9" height="7.5"/><rect x="1197.0" y="826.2" width="0.9" height="6.6"/><rect x="1198.0" y="827.4" width="0.9" height="4.2"/><rect x="1199.0" y="826.5" width="0.9" height="6.0"/><rect x="1200.0" y="826.9" width="0.9" height="5.2"/><rect x="1201.0" y="827.6" width="0.9" height="3.8"/><rect x="1202.0" y="824.1" width="0.9" height="10.9"/><rect x="1203.0" y="824.4" width="0.9" height="10.3"/><rect x="1204.0" y="825.6" width="0.9" height="7.9"/><rect x="1205.0" y="818.0" width="0.9" height="23.0"/><rect x="1206.0" y="825.1" width="0.9" height="8.9"/><rect x="1207.0" y="821.6" width="0.9" height="15.9"/><rect x="1208.0" y="823.5" width="0.9" height="12.1"/><rect x="1209.0" y="823.1" width="0.9" height="12.9"/><rect x="1210.0" y="826.4" width="0.9" height="6.2"/><rect x="1211.0" y="827.6" width="0.9" height="3.8"/><rect x="1212.0" y="827.8" width="0.9" height="3.4"/><rect x="1213.0" y="828.1" width="0.9" height="2.9"/><rect x="1214.0" y="827.2" width="0.9" height="4.6"/><rect x="1215.0" y="827.2" width="0.9" height="4.6"/><rect x="1216.0" y="825.1" width="0.9" height="8.7"/><rect x="1217.0" y="826.1" width="0.9" height="6.7"/><rect x="1218.0" y="825.0" width="0.9" height="9.0"/><rect x="1219.0" y="825.4" width="0.9" height="8.1"/><rect x="1220.0" y="822.4" width="0.9" height="14.2"/><rect x="1221.0" y="824.3" width="0.9" height="10.4"/><rect x="1222.0" y="825.5" width="0.9" height="7.9"/><rect x="1223.0" y="826.9" width="0.9" height="5.1"/><rect x="1224.0" y="827.8" width="0.9" height="3.5"/><rect x="1225.0" y="828.3" width="0.9" height="2.3"/><rect x="1226.0" y="827.2" width="0.9" height="4.5"/><rect x="1227.0" y="827.8" width="0.9" height="3.4"/><rect x="1228.0" y="828.6" width="0.9" height="1.9"/><rect x="1229.0" y="828.3" width="0.9" height="2.3"/><rect x="1230.0" y="828.4" width="0.9" height="2.2"/><rect x="1231.0" y="827.1" width="0.9" height="4.9"/><rect x="1232.0" y="826.1" width="0.9" height="6.8"/><rect x="1233.0" y="827.2" width="0.9" height="4.6"/><rect x="1234.0" y="824.1" width="0.9" height="10.8"/><rect x="1235.0" y="825.3" width="0.9" height="8.4"/><rect x="1236.0" y="823.1" width="0.9" height="12.7"/><rect x="1237.0" y="822.7" width="0.9" height="13.6"/><rect x="1238.0" y="824.8" width="0.9" height="9.4"/><rect x="1239.0" y="825.3" width="0.9" height="8.3"/><rect x="1240.0" y="827.3" width="0.9" height="4.4"/><rect x="1241.0" y="828.4" width="0.9" height="2.2"/><rect x="1242.0" y="827.5" width="0.9" height="4.1"/><rect x="1243.0" y="827.1" width="0.9" height="4.9"/><rect x="1244.0" y="827.5" width="0.9" height="3.9"/><rect x="1245.0" y="826.1" width="0.9" height="6.8"/><rect x="1246.0" y="825.3" width="0.9" height="8.4"/><rect x="1247.0" y="825.9" width="0.9" height="7.1"/><rect x="1248.0" y="823.2" width="0.9" height="12.6"/><rect x="1249.0" y="822.3" width="0.9" height="14.4"/><rect x="1250.0" y="822.0" width="0.9" height="15.0"/><rect x="1251.0" y="821.7" width="0.9" height="15.7"/><rect x="1252.0" y="824.9" width="0.9" height="9.3"/><rect x="1253.0" y="823.9" width="0.9" height="11.1"/><rect x="1254.0" y="825.8" width="0.9" height="7.4"/><rect x="1255.0" y="826.3" width="0.9" height="6.3"/><rect x="1256.0" y="827.1" width="0.9" height="4.8"/><rect x="1257.0" y="827.1" width="0.9" height="4.9"/><rect x="1258.0" y="826.9" width="0.9" height="5.2"/><rect x="1259.0" y="825.3" width="0.9" height="8.3"/><rect x="1260.0" y="825.9" width="0.9" height="7.3"/><rect x="1261.0" y="824.0" width="0.9" height="11.0"/><rect x="1262.0" y="823.2" width="0.9" height="12.7"/><rect x="1263.0" y="824.3" width="0.9" height="10.3"/><rect x="1264.0" y="826.2" width="0.9" height="6.7"/><rect x="1265.0" y="827.6" width="0.9" height="3.8"/><rect x="1266.0" y="828.0" width="0.9" height="3.0"/><rect x="1267.0" y="827.8" width="0.9" height="3.5"/><rect x="1268.0" y="827.6" width="0.9" height="3.9"/><rect x="1269.0" y="827.4" width="0.9" height="4.3"/><rect x="1270.0" y="827.5" width="0.9" height="4.1"/><rect x="1271.0" y="828.1" width="0.9" height="2.8"/><rect x="1272.0" y="827.1" width="0.9" height="4.8"/><rect x="1273.0" y="828.1" width="0.9" height="2.8"/><rect x="1274.0" y="827.2" width="0.9" height="4.7"/><rect x="1275.0" y="828.1" width="0.9" height="2.7"/><rect x="1276.0" y="825.8" width="0.9" height="7.4"/><rect x="1277.0" y="825.0" width="0.9" height="9.1"/><rect x="1278.0" y="822.5" width="0.9" height="13.9"/><rect x="1279.0" y="822.1" width="0.9" height="14.8"/><rect x="1280.0" y="823.3" width="0.9" height="12.3"/><rect x="1281.0" y="823.6" width="0.9" height="11.9"/><rect x="1282.0" y="825.2" width="0.9" height="8.6"/><rect x="1283.0" y="826.5" width="0.9" height="5.9"/><rect x="1284.0" y="827.9" width="0.9" height="3.1"/><rect x="1285.0" y="827.5" width="0.9" height="4.1"/><rect x="1286.0" y="826.5" width="0.9" height="5.9"/><rect x="1287.0" y="827.5" width="0.9" height="3.9"/><rect x="1288.0" y="824.4" width="0.9" height="10.1"/><rect x="1289.0" y="824.6" width="0.9" height="9.8"/><rect x="1290.0" y="824.0" width="0.9" height="11.0"/><rect x="1291.0" y="825.6" width="0.9" height="7.7"/><rect x="1292.0" y="822.3" width="0.9" height="14.4"/><rect x="1293.0" y="824.1" width="0.9" height="10.9"/><rect x="1294.0" y="821.5" width="0.9" height="15.9"/><rect x="1295.0" y="821.8" width="0.9" height="15.4"/><rect x="1296.0" y="823.7" width="0.9" height="11.6"/><rect x="1297.0" y="826.1" width="0.9" height="6.8"/><rect x="1298.0" y="827.4" width="0.9" height="4.2"/><rect x="1299.0" y="828.2" width="0.9" height="2.6"/><rect x="1300.0" y="827.1" width="0.9" height="4.8"/><rect x="1301.0" y="827.0" width="0.9" height="4.9"/><rect x="1302.0" y="825.9" width="0.9" height="7.2"/><rect x="1303.0" y="826.1" width="0.9" height="6.9"/><rect x="1304.0" y="822.9" width="0.9" height="13.3"/><rect x="1305.0" y="825.6" width="0.9" height="7.8"/><rect x="1306.0" y="825.3" width="0.9" height="8.5"/><rect x="1307.0" y="826.0" width="0.9" height="7.0"/><rect x="1308.0" y="825.6" width="0.9" height="7.8"/><rect x="1309.0" y="825.8" width="0.9" height="7.4"/><rect x="1310.0" y="828.1" width="0.9" height="2.9"/><rect x="1311.0" y="827.4" width="0.9" height="4.2"/><rect x="1312.0" y="827.3" width="0.9" height="4.4"/><rect x="1313.0" y="828.3" width="0.9" height="2.5"/><rect x="1314.0" y="828.5" width="0.9" height="2.0"/><rect x="1315.0" y="827.7" width="0.9" height="3.6"/><rect x="1316.0" y="827.2" width="0.9" height="4.6"/><rect x="1317.0" y="827.0" width="0.9" height="5.1"/><rect x="1318.0" y="826.9" width="0.9" height="5.3"/><rect x="1319.0" y="827.0" width="0.9" height="5.0"/><rect x="1320.0" y="826.2" width="0.9" height="6.7"/><rect x="1321.0" y="824.8" width="0.9" height="9.4"/><rect x="1322.0" y="822.2" width="0.9" height="14.7"/><rect x="1323.0" y="825.2" width="0.9" height="8.7"/><rect x="1324.0" y="825.7" width="0.9" height="7.5"/><rect x="1325.0" y="825.3" width="0.9" height="8.4"/><rect x="1326.0" y="825.3" width="0.9" height="8.4"/><rect x="1327.0" y="827.9" width="0.9" height="3.2"/><rect x="1328.0" y="828.4" width="0.9" height="2.2"/><rect x="1329.0" y="828.2" width="0.9" height="2.6"/><rect x="1330.0" y="826.9" width="0.9" height="5.2"/><rect x="1331.0" y="826.0" width="0.9" height="7.0"/><rect x="1332.0" y="826.5" width="0.9" height="6.0"/><rect x="1333.0" y="825.5" width="0.9" height="8.0"/><rect x="1334.0" y="821.8" width="0.9" height="15.4"/><rect x="1335.0" y="820.4" width="0.9" height="18.1"/><rect x="1336.0" y="820.0" width="0.9" height="19.0"/><rect x="1337.0" y="820.6" width="0.9" height="17.8"/><rect x="1338.0" y="826.0" width="0.9" height="6.9"/><rect x="1339.0" y="825.0" width="0.9" height="9.0"/><rect x="1340.0" y="825.0" width="0.9" height="8.9"/><rect x="1341.0" y="825.8" width="0.9" height="7.4"/><rect x="1342.0" y="827.8" width="0.9" height="3.5"/><rect x="1343.0" y="826.8" width="0.9" height="5.4"/><rect x="1344.0" y="827.0" width="0.9" height="5.0"/><rect x="1345.0" y="825.6" width="0.9" height="7.8"/><rect x="1346.0" y="826.8" width="0.9" height="5.3"/><rect x="1347.0" y="824.1" width="0.9" height="10.9"/><rect x="1348.0" y="822.5" width="0.9" height="14.0"/><rect x="1349.0" y="824.3" width="0.9" height="10.4"/><rect x="1350.0" y="826.6" width="0.9" height="5.9"/><rect x="1351.0" y="826.8" width="0.9" height="5.4"/><rect x="1352.0" y="827.6" width="0.9" height="3.9"/><rect x="1353.0" y="828.1" width="0.9" height="2.7"/><rect x="1354.0" y="828.2" width="0.9" height="2.5"/><rect x="1355.0" y="827.5" width="0.9" height="3.9"/><rect x="1356.0" y="828.4" width="0.9" height="2.1"/><rect x="1357.0" y="827.4" width="0.9" height="4.2"/><rect x="1358.0" y="827.4" width="0.9" height="4.2"/><rect x="1359.0" y="827.3" width="0.9" height="4.5"/><rect x="1360.0" y="827.2" width="0.9" height="4.7"/><rect x="1361.0" y="827.0" width="0.9" height="4.9"/><rect x="1362.0" y="825.9" width="0.9" height="7.1"/><rect x="1363.0" y="824.7" width="0.9" height="9.6"/><rect x="1364.0" y="824.7" width="0.9" height="9.6"/><rect x="1365.0" y="822.1" width="0.9" height="14.8"/><rect x="1366.0" y="826.2" width="0.9" height="6.7"/><rect x="1367.0" y="826.4" width="0.9" height="6.2"/><rect x="1368.0" y="827.1" width="0.9" height="4.8"/><rect x="1369.0" y="827.2" width="0.9" height="4.5"/><rect x="1370.0" y="827.4" width="0.9" height="4.3"/><rect x="1371.0" y="827.5" width="0.9" height="4.0"/><rect x="1372.0" y="827.1" width="0.9" height="4.7"/><rect x="1373.0" y="826.7" width="0.9" height="5.7"/><rect x="1374.0" y="827.8" width="0.9" height="3.5"/><rect x="1375.0" y="825.9" width="0.9" height="7.1"/><rect x="1376.0" y="824.0" width="0.9" height="11.0"/><rect x="1377.0" y="823.6" width="0.9" height="11.8"/><rect x="1378.0" y="824.6" width="0.9" height="9.8"/><rect x="1379.0" y="820.6" width="0.9" height="17.7"/><rect x="1380.0" y="822.8" width="0.9" height="13.3"/><rect x="1381.0" y="822.0" width="0.9" height="15.1"/><rect x="1382.0" y="824.5" width="0.9" height="9.9"/><rect x="1383.0" y="824.2" width="0.9" height="10.7"/><rect x="1384.0" y="825.6" width="0.9" height="7.9"/><rect x="1385.0" y="828.2" width="0.9" height="2.6"/><rect x="1386.0" y="827.0" width="0.9" height="5.0"/><rect x="1387.0" y="826.9" width="0.9" height="5.1"/><rect x="1388.0" y="827.5" width="0.9" height="4.1"/><rect x="1389.0" y="827.4" width="0.9" height="4.2"/><rect x="1390.0" y="825.3" width="0.9" height="8.4"/><rect x="1391.0" y="825.1" width="0.9" height="8.8"/><rect x="1392.0" y="822.9" width="0.9" height="13.3"/><rect x="578" y="828.8" width="815" height="1.6"/></g></svg><svg class="a" style="left:448px;top:821px" width="19" height="18" viewBox="0 0 19 18"><path d="M6 3.5 L18 0.5 V13.5 a3.2 3.2 0 1 1 -2.4 -3.1 V5.8 L8.4 7.5 V15 a3.2 3.2 0 1 1 -2.4 -3.1 Z" fill="#dfe3cf"/></svg><svg class="a" style="left:449px;top:729px" width="16" height="15" viewBox="0 0 16 15" fill="#e8edcc"><path d="M1 0.5 H15 V4.5 H14 C14 2.5 13.2 1.7 11.5 1.7 H8.8 V13 H10.8 V14.3 H5.2 V13 H7.2 V1.7 H4.5 C2.8 1.7 2 2.5 2 4.5 H1 Z"/></svg><svg class="a" style="left:1630px;top:16px" width="22" height="20" viewBox="0 0 22 20">
<path d="M2 6 L6.5 11 L11 3 L15.5 11 L20 6 L18.5 17 H3.5 Z" fill="#f1b72c" stroke="#c98a10" stroke-width="0.8"/>
<rect x="3.5" y="15.5" width="15" height="2.5" fill="#e0a020"/>
<circle cx="2" cy="5.5" r="1.5" fill="#f1b72c"/><circle cx="11" cy="2.5" r="1.5" fill="#f1b72c"/><circle cx="20" cy="5.5" r="1.5" fill="#f1b72c"/>
<circle cx="11" cy="12.5" r="1.6" fill="#7ac0e0"/>
</svg><svg class="a" style="left:1694px;top:16px" width="20" height="22" viewBox="0 0 20 22">
<path d="M4 14 L1 18 L4 19 Z" fill="#e8432a"/>
<path d="M6 16 L7 21 L10 18 Z" fill="#e8432a"/>
<path d="M5 16 C4 10 8 4 17 1.5 C16 10 12 15 7 18 Z" fill="#f2f2f4"/>
<path d="M13 3 C15 2.2 16.3 1.8 17 1.5 C16.7 3 16.3 4.5 15.8 5.8 Z" fill="#e8432a"/>
<circle cx="11.3" cy="8.7" r="2" fill="#3a4a7a" stroke="#9aa" stroke-width="0.6"/>
<path d="M3 19 L5 15 L7 17 Z" fill="#f7a030"/>
</svg>

<!-- right panel -->
<div class="a" style="left:1507px;top:74px;width:305px;height:31px;border-radius:7px;background:#e2ff00"></div>
<div class="a b nowrap" style="left:1507px;top:80px;width:305px;text-align:center;font-size:15.4px;color:#000;line-height:18px">Edit In Editor</div>
<svg class="a" style="left:1509px;top:131px" width="9" height="6" viewBox="0 0 9 6"><path d="M4.5 0.3 L8.7 5.7 H0.3 Z" fill="#e2ff00"/></svg>
<div class="a sect nowrap" style="left:1523px;top:124px;font-size:15.3px">Animation</div>

<div id="anims"></div>

<div class="a" style="left:1507px;top:581px;width:305px;height:301px;background:#1a1a1f"></div>
<div class="a b nowrap" style="left:1507px;top:590px;width:305px;text-align:center;font-size:15.1px;color:#fff;line-height:18px">Animation Preview</div>
<div id="animprev" class="a thumb" style="left:1517px;top:619px;width:285px;height:253px"><svg width="285" height="253" viewBox="0 0 285 253" style="display:block">
<path d="M126 22 C121 32 120 50 121 70 C122 80 124 90 126 96 L129 96 C127 80 127 60 130 40 Z" fill="#b21e12"/>
<path d="M157 22 C162 32 163 50 162 70 C161 80 159 90 157 96 L154 96 C156 80 156 60 153 40 Z" fill="#a81b10"/>
<path d="M124 57 C119 59 118 66 117 78 C116 98 115 118 114 132 L113 138 L117 142 L120 134 C121 116 123 96 126 80 Z" fill="#e4c6b8"/>
<path d="M160 57 C165 59 166 66 167 78 C168 98 169 118 170 132 L171 138 L167 142 L164 134 C163 116 161 96 158 80 Z" fill="#dcbcae"/>
<path d="M122 55 C130 52 152 52 162 55 L160 66 L124 66 Z" fill="#e6c8ba"/>
<rect x="136" y="43" width="11" height="11" fill="#dcb4a6"/>
<path d="M124 51 L160 51 L161 58 C159 66 158 72 159 84 L125 84 C126 72 125 66 123 58 Z" fill="#1d1d20"/>
<path d="M139 62 C137 66 139 70 141.5 72 C144 70 146 66 144 62 Z" fill="#d8b8aa"/>
<path d="M128 84 L156 84 C155 90 155 96 157 102 L127 102 C129 96 129 90 128 84 Z" fill="#e4c4b6"/>
<path d="M124 100 L162 100 L163 112 L122 112 Z" fill="#2c2c2f"/>
<rect x="120" y="98" width="10" height="20" rx="2" fill="#303033"/>
<rect x="128" y="110" width="6" height="14" rx="1" fill="#2a2a2d"/>
<rect x="150" y="100" width="14" height="13" rx="2" fill="#303033"/>
<path d="M123 110 L164 110 C165 130 163 150 161 170 L162 203 L152 203 L149 170 L143 124 L141 124 L136 170 L134 203 L124 203 L123 170 C121 150 121 130 123 110 Z" fill="#232326"/>
<path d="M123 200 L135 200 L135 230 L133 236 L116 236 L118 228 C122 222 123 210 123 200 Z" fill="#141416"/>
<path d="M151 200 L162 200 C162 210 163 222 166 228 L167 236 L152 236 L151 230 Z" fill="#141416"/>
<path d="M133 44 C130 38 131 26 133 22 L151 22 C153 26 154 38 151 44 C148 48 136 48 133 44 Z" fill="#ecd0c4"/>
<path d="M130 38 C126 24 132 15 142 15 C152 15 158 24 154 38 C152 30 150 26 146 24 C140 26 136 27 132 28 C131 32 131 35 130 38 Z" fill="#c02314"/>
<circle cx="127" cy="24" r="5" fill="#b91f12"/><circle cx="157" cy="24" r="5" fill="#b91f12"/>
</svg></div>

<!-- right sidebar -->
<div id="rsbicons"></div>

</body></html>
